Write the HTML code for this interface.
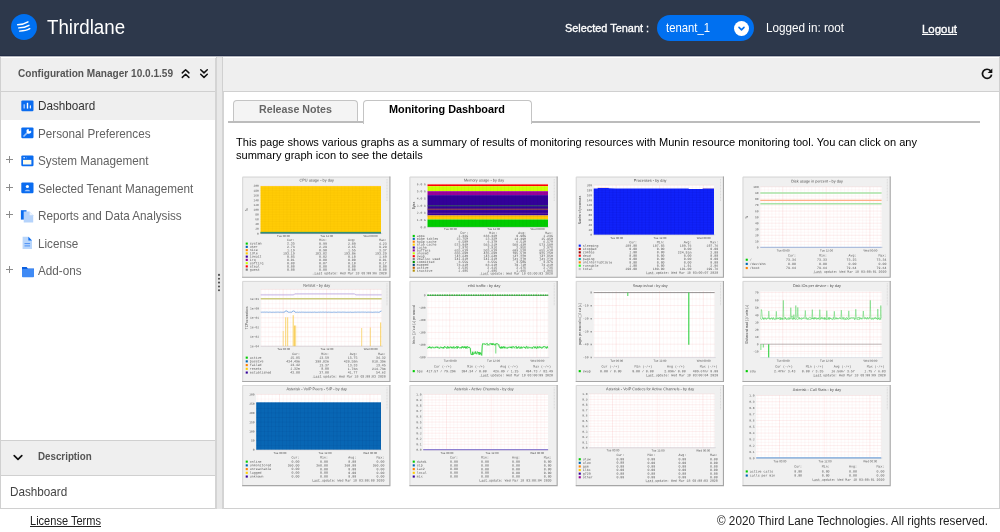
<!DOCTYPE html>
<html>
<head>
<meta charset="utf-8">
<title>Thirdlane</title>
<style>
*{box-sizing:border-box;margin:0;padding:0}
html,body{width:1000px;height:532px;overflow:hidden;background:#fff;will-change:transform;font-family:"Liberation Sans",sans-serif;color:#333}
.sx{position:absolute;white-space:nowrap;transform-origin:0 50%;display:block}
#hdr{position:absolute;left:0;top:0;width:1000px;height:56px;background:#2d384b;border-bottom:1px solid #222c45}
#logo{position:absolute;left:11px;top:14px;width:26px;height:26px;border-radius:50%;background:#0070f0}
#brand{left:47px;top:15px;font-size:19.5px;line-height:24px;color:#fff;transform:scaleX(.96)}
#selten{left:565px;top:20px;font-size:11.8px;line-height:16px;color:#fff;-webkit-text-stroke:.35px #fff;transform:scaleX(.924)}
#pill{position:absolute;left:656.5px;top:15.3px;width:97.5px;height:26px;border-radius:13px;background:#0070f0}
#pill span{left:9.5px;top:4.7px;font-size:13px;line-height:16px;color:#fff;transform:scaleX(.87)}
#pillc{position:absolute;left:77.5px;top:5.6px;width:15px;height:15px;border-radius:50%;background:#fff}
#logged{left:766px;top:20px;font-size:13px;line-height:16px;color:#fff;transform:scaleX(.9)}
#logout{left:922px;top:20.6px;font-size:11.5px;line-height:16px;color:#fff;-webkit-text-stroke:.35px #fff;text-decoration:underline;transform:scaleX(.995)}

#hline{position:absolute;left:0;top:56px;width:1000px;height:1px;background:#b4b7be}
#left{position:absolute;left:0;top:57px;width:217px;height:452px;border:1px solid #d0d0d0;border-top:none;background:#fff}
#lhead{position:absolute;left:0;top:58px;width:217px;height:34px;background:#efefef;border:1px solid #d0d0d0;border-top:none}
#lhead span{left:17px;top:7.6px;font-size:11.5px;line-height:14px;color:#555;font-weight:bold;transform:scaleX(.876)}
.row{position:absolute;left:1px;width:215px;height:27.6px;font-size:13px;line-height:27.6px;color:#626262;white-space:nowrap}
.row .t{left:37px;top:.4px;transform:scaleX(.9)}
.row .plus{position:absolute;left:5.3px;top:9px;width:7px;height:7px;opacity:.75}
.row .plus:before{content:"";position:absolute;left:0;top:3px;width:7px;height:1px;background:#666}
.row .plus:after{content:"";position:absolute;left:3px;top:0;width:1px;height:7px;background:#666}
.row svg{position:absolute;left:20px;top:7px}
#split{position:absolute;left:217px;top:57px;width:5px;height:452px;background:#e8e8e8}
.sl{position:absolute;top:58px;height:451px;background:#d4d4d4}
.dot{position:absolute;left:218.6px;width:1.9px;height:1.9px;border-radius:50%;background:#555}
#right{position:absolute;left:222px;top:57px;width:778px;height:452px;border:1px solid #d0d0d0;border-top:none;background:#fff}
#rhead{position:absolute;left:222px;top:58px;width:778px;height:34px;background:#efefef;border:1px solid #d0d0d0;border-top:none}
.tab{position:absolute;top:100px;height:23px;border:1px solid #c4c4c4;border-bottom:none;border-radius:4px 4px 0 0}
.tab span{top:1.4px;font-size:10.4px;line-height:16px;font-weight:bold}
#tabline{position:absolute;left:228px;top:120.8px;width:751.5px;height:1.8px;background:#bcbcbc}
#para{position:absolute;left:236px;top:136.2px;font-size:11.05px;line-height:12.65px;color:#000;white-space:nowrap}
.g{position:absolute;width:150px;height:103px}
.g svg{display:block;overflow:visible}
.g text.s{font-family:"Liberation Sans",sans-serif}
.g text.m{font-family:"Liberation Mono",monospace}
#dhead{position:absolute;left:0;top:440px;width:217px;height:36px;background:#efefef;border:1px solid #d0d0d0}
#dhead span{left:37px;top:8.3px;font-size:11.5px;line-height:14px;color:#555;font-weight:bold;transform:scaleX(.85)}
#dbody{left:10px;top:484.2px;font-size:13px;line-height:16px;color:#444;transform:scaleX(.9)}
#lic{left:30px;top:513.8px;font-size:12px;line-height:14px;color:#222;text-decoration:underline;transform:scaleX(.92)}
#copy{left:717px;top:513.5px;font-size:12.5px;line-height:14px;color:#222;transform:scaleX(.936)}
</style>
</head>
<body>
<div id="hdr">
  <div id="logo"><svg width="26" height="26" viewBox="0 0 26 26" style="position:absolute;left:0;top:0"><g fill="none" stroke="#fff" stroke-width="1.4" stroke-linecap="round"><path d="M6.6 10.7C10 10.6 14 9.8 17 7.9"/><path d="M7.7 13.9C11 13.8 15 13.1 18 11.3"/><path d="M8.6 17.1C12 17 16 16.4 18.8 14.7"/></g></svg></div>
  <span class="sx" id="brand">Thirdlane</span>
  <span class="sx" id="selten">Selected Tenant :</span>
  <div id="pill"><span class="sx">tenant_1</span><div id="pillc"><svg width="15" height="15" viewBox="0 0 15 15" style="position:absolute;left:0;top:0"><path d="M5 6.4L7.5 8.8L10 6.4" fill="none" stroke="#0070f0" stroke-width="1.6" stroke-linecap="round" stroke-linejoin="round"/></svg></div></div>
  <span class="sx" id="logged">Logged in: root</span>
  <span class="sx" id="logout">Logout</span>
</div>

<div id="hline"></div>
<div id="left"></div>
<div id="lhead"><span class="sx">Configuration Manager 10.0.1.59</span>
<svg width="30" height="12" viewBox="0 0 30 12" style="position:absolute;left:179.4px;top:9.6px"><g fill="none" stroke="#111" stroke-width="1.5" stroke-linecap="round" stroke-linejoin="round"><path d="M2.3 4.9L5.6 1.8L8.9 4.9M2.3 9.4L5.6 6.3L8.9 9.4"/><path d="M20.7 1.8L24 4.9L27.3 1.8M20.7 6.3L24 9.4L27.3 6.3"/></g></svg></div>
<div class="row" style="top:92px;background:#efefef"><svg style="left:20.4px;top:7.8px" width="13" height="12" viewBox="0 0 13 12"><rect x=".3" y=".4" width="12.2" height="10.8" rx="1.2" fill="#0a6cf0"/><rect x="2.6" y="4.3" width="1.1" height="4.2" fill="#cfe0fc"/><rect x="5.8" y="2.8" width="1.4" height="5.8" fill="#fff"/><rect x="8.8" y="5.2" width="1.1" height="3.4" rx=".5" fill="#fff"/></svg><span class="sx t" style="color:#333">Dashboard</span></div>
<div class="row" style="top:119.5px"><svg style="left:20.4px;top:7.8px" width="13" height="12" viewBox="0 0 13 12"><rect x=".3" y=".4" width="12.2" height="10.8" rx="1.2" fill="#0a6cf0"/><path d="M3 9L7 5" stroke="#9cc3fa" stroke-width="1.7" stroke-linecap="round"/><path d="M9.8 3.2A2.3 2.3 0 1 1 7.6 2.1L7.9 3.9L9.3 4.2Z" fill="#fff"/></svg><span class="sx t">Personal Preferences</span></div>
<div class="row" style="top:147.0px"><i class="plus"></i><svg style="left:20.4px;top:7.8px" width="13" height="12" viewBox="0 0 13 12"><rect x=".3" y=".4" width="12.2" height="10.8" rx="1.2" fill="#0a6cf0"/><rect x="2" y="4.9" width="8.4" height="4.6" fill="#fffbe8"/><circle cx="3.1" cy="2.8" r=".75" fill="#fff"/><circle cx="5.6" cy="2.8" r=".5" fill="#6fa8f8"/></svg><span class="sx t">System Management</span></div>
<div class="row" style="top:174.5px"><i class="plus"></i><svg style="left:20.4px;top:7.8px" width="13" height="12" viewBox="0 0 13 12"><rect x=".3" y=".4" width="12.2" height="10.8" rx="1.2" fill="#0a6cf0"/><circle cx="6.4" cy="4.5" r="1.6" fill="#fff"/><path d="M3.6 9.3C3.9 7.3 8.9 7.3 9.2 9.3Z" fill="#9cc3fa"/></svg><span class="sx t">Selected Tenant Management</span></div>
<div class="row" style="top:202.0px"><i class="plus"></i><svg style="left:19.4px;top:6.6px" width="14" height="14" viewBox="0 0 14 14"><path d="M.9 1.2h5.6v9.4H.9z" fill="#0a6cf0"/><path d="M3.7 2.6h5.9l3.6 3.6v7.2H3.7z" fill="#b5d3fb"/><path d="M9.6 2.6l3.6 3.6H9.6z" fill="#fff" opacity=".75"/></svg><span class="sx t">Reports and Data Analysiss</span></div>
<div class="row" style="top:229.5px"><svg style="left:20.4px;top:6.8px" width="12" height="14" viewBox="0 0 12 14"><path d="M1.6.8h5.8l3.6 3.6v8.6H1.6z" fill="#b9d6fb"/><path d="M7.4.8l3.6 3.6H7.4z" fill="#0a6cf0"/><path d="M3.5 7.6h5.6M3.5 9.9h5.6" stroke="#4c90f4" stroke-width="1"/></svg><span class="sx t">License</span></div>
<div class="row" style="top:257.0px"><i class="plus"></i><svg style="left:19.6px;top:8.6px" width="14" height="12" viewBox="0 0 14 12"><path d="M1 .9h4.6l1.2 1.6h6.2v2H1z" fill="#0a5fe0"/><rect x="1" y="2.9" width="12" height="8.3" rx=".8" fill="#3f8af5"/></svg><span class="sx t">Add-ons</span></div>
<div id="dhead"><svg width="12" height="8" viewBox="0 0 12 8" style="position:absolute;left:10.6px;top:12.7px"><path d="M2.2 1.6L6 5.3L9.8 1.6" fill="none" stroke="#111" stroke-width="1.7" stroke-linecap="round" stroke-linejoin="round"/></svg><span class="sx">Description</span></div>
<span class="sx" id="dbody">Dashboard</span>

<div id="split"></div>
<div id="right"></div>
<div class="sl" style="left:215.3px;width:1.7px"></div><div class="sl" style="left:222px;width:1.8px"></div><svg width="6" height="24" viewBox="0 0 6 24" style="position:absolute;left:216.1px;top:271px"><circle cx="3" cy="3.90" r="1.05" fill="#505050"/><circle cx="3" cy="7.75" r="1.05" fill="#505050"/><circle cx="3" cy="11.60" r="1.05" fill="#505050"/><circle cx="3" cy="15.45" r="1.05" fill="#505050"/><circle cx="3" cy="19.30" r="1.05" fill="#505050"/></svg>
<div id="rhead"><svg width="14" height="14" viewBox="0 0 14 14" style="position:absolute;left:757px;top:9px"><path d="M10.6 3.9A4.6 4.6 0 1 0 11.6 7.6" fill="none" stroke="#111" stroke-width="1.7"/><path d="M12.3 1.4V6H7.7Z" fill="#111"/></svg></div>
<div class="tab" style="left:233px;width:125px;background:#f4f4f4;color:#666"><span class="sx" style="left:25px;transform:scaleX(1.027)">Release Notes</span></div>
<div id="tabline"></div>
<div class="tab" style="left:363px;width:169px;background:#fff;color:#000;height:24px"><span class="sx" style="left:25px;transform:scaleX(1.046)">Monitoring Dashboard</span></div>
<div id="para">This page shows various graphs as a summary of results of monitoring resources with Munin resource monitoring tool. You can click on any<br>summary graph icon to see the details</div>

<div class="g" style="left:242px;top:176.2px"><svg width="150" height="103" viewBox="0 0 150 103"><rect x="0.2" y="0.6" width="148.2" height="101.1" fill="#f0f0f0"/><path d="M0.7 101.69999999999999V1.1H148.39999999999998" stroke="#d6d6d6" stroke-width="1" fill="none"/><path d="M147.89999999999998 0.6V101.19999999999999H0.2" stroke="#a6a6a6" stroke-width="1.1" fill="none"/><text x="74.7" y="5.40" font-size="3.85" text-anchor="middle" fill="#333" fill-opacity="0.85" class="s" transform="rotate(0.03)">CPU usage - by day</text><rect x="18.5" y="9.8" width="120.5" height="47.8" fill="#fff"/><path d="M19.22 9.8V57.6M22.85 9.8V57.6M26.48 9.8V57.6M30.11 9.8V57.6M33.74 9.8V57.6M37.37 9.8V57.6M41.00 9.8V57.6M44.63 9.8V57.6M48.26 9.8V57.6M51.89 9.8V57.6M55.52 9.8V57.6M59.15 9.8V57.6M62.78 9.8V57.6M66.41 9.8V57.6M70.04 9.8V57.6M73.67 9.8V57.6M77.30 9.8V57.6M80.93 9.8V57.6M84.56 9.8V57.6M88.19 9.8V57.6M91.82 9.8V57.6M95.45 9.8V57.6M99.08 9.8V57.6M102.71 9.8V57.6M106.34 9.8V57.6M109.97 9.8V57.6M113.60 9.8V57.6M117.23 9.8V57.6M120.86 9.8V57.6M124.49 9.8V57.6M128.12 9.8V57.6M131.75 9.8V57.6M135.38 9.8V57.6" stroke="#f9caca" stroke-width="0.4" fill="none" opacity="0.32"/><path d="M18.5 55.21H139M18.5 50.43H139M18.5 45.65H139M18.5 40.87H139M18.5 36.09H139M18.5 31.31H139M18.5 26.53H139M18.5 21.75H139M18.5 16.97H139M18.5 12.19H139" stroke="#f9caca" stroke-width="0.4" fill="none" opacity="0.32"/><path d="M18.5 57.60H139M18.5 52.82H139M18.5 48.04H139M18.5 43.26H139M18.5 38.48H139M18.5 33.70H139M18.5 28.92H139M18.5 24.14H139M18.5 19.36H139M18.5 14.58H139M18.5 9.80H139" stroke="#f4a4a4" stroke-width="0.4" fill="none" opacity="0.45"/><path d="M41.00 9.8V57.6M84.30 9.8V57.6M128.10 9.8V57.6" stroke="#f4a4a4" stroke-width="0.4" fill="none" opacity="0.33"/><rect x="18.5" y="10.100000000000001" width="120.5" height="47.5" fill="#ffcb05"/><path d="M19.50 10.4V55.6" stroke="#e0a800" stroke-width="0.35" opacity="0.3"/><path d="M23.13 10.4V55.6" stroke="#e0a800" stroke-width="0.35" opacity="0.3"/><path d="M26.76 10.4V55.6" stroke="#e0a800" stroke-width="0.35" opacity="0.3"/><path d="M30.39 10.4V55.6" stroke="#e0a800" stroke-width="0.35" opacity="0.3"/><path d="M34.02 10.4V55.6" stroke="#e0a800" stroke-width="0.35" opacity="0.3"/><path d="M37.65 10.4V55.6" stroke="#e0a800" stroke-width="0.35" opacity="0.3"/><path d="M41.28 10.4V55.6" stroke="#e0a800" stroke-width="0.35" opacity="0.3"/><path d="M44.91 10.4V55.6" stroke="#e0a800" stroke-width="0.35" opacity="0.3"/><path d="M48.54 10.4V55.6" stroke="#e0a800" stroke-width="0.35" opacity="0.3"/><path d="M52.17 10.4V55.6" stroke="#e0a800" stroke-width="0.35" opacity="0.3"/><path d="M55.80 10.4V55.6" stroke="#e0a800" stroke-width="0.35" opacity="0.3"/><path d="M59.43 10.4V55.6" stroke="#e0a800" stroke-width="0.35" opacity="0.3"/><path d="M63.06 10.4V55.6" stroke="#e0a800" stroke-width="0.35" opacity="0.3"/><path d="M66.69 10.4V55.6" stroke="#e0a800" stroke-width="0.35" opacity="0.3"/><path d="M70.32 10.4V55.6" stroke="#e0a800" stroke-width="0.35" opacity="0.3"/><path d="M73.95 10.4V55.6" stroke="#e0a800" stroke-width="0.35" opacity="0.3"/><path d="M77.58 10.4V55.6" stroke="#e0a800" stroke-width="0.35" opacity="0.3"/><path d="M81.21 10.4V55.6" stroke="#e0a800" stroke-width="0.35" opacity="0.3"/><path d="M84.84 10.4V55.6" stroke="#e0a800" stroke-width="0.35" opacity="0.3"/><path d="M88.47 10.4V55.6" stroke="#e0a800" stroke-width="0.35" opacity="0.3"/><path d="M92.10 10.4V55.6" stroke="#e0a800" stroke-width="0.35" opacity="0.3"/><path d="M95.73 10.4V55.6" stroke="#e0a800" stroke-width="0.35" opacity="0.3"/><path d="M99.36 10.4V55.6" stroke="#e0a800" stroke-width="0.35" opacity="0.3"/><path d="M102.99 10.4V55.6" stroke="#e0a800" stroke-width="0.35" opacity="0.3"/><path d="M106.62 10.4V55.6" stroke="#e0a800" stroke-width="0.35" opacity="0.3"/><path d="M110.25 10.4V55.6" stroke="#e0a800" stroke-width="0.35" opacity="0.3"/><path d="M113.88 10.4V55.6" stroke="#e0a800" stroke-width="0.35" opacity="0.3"/><path d="M117.51 10.4V55.6" stroke="#e0a800" stroke-width="0.35" opacity="0.3"/><path d="M121.14 10.4V55.6" stroke="#e0a800" stroke-width="0.35" opacity="0.3"/><path d="M124.77 10.4V55.6" stroke="#e0a800" stroke-width="0.35" opacity="0.3"/><path d="M128.40 10.4V55.6" stroke="#e0a800" stroke-width="0.35" opacity="0.3"/><path d="M132.03 10.4V55.6" stroke="#e0a800" stroke-width="0.35" opacity="0.3"/><path d="M135.66 10.4V55.6" stroke="#e0a800" stroke-width="0.35" opacity="0.3"/><path d="M18.5 12.19H139" stroke="#e0a800" stroke-width="0.35" opacity="0.25"/><path d="M18.5 14.58H139" stroke="#e0a800" stroke-width="0.35" opacity="0.25"/><path d="M18.5 16.97H139" stroke="#e0a800" stroke-width="0.35" opacity="0.25"/><path d="M18.5 19.36H139" stroke="#e0a800" stroke-width="0.35" opacity="0.25"/><path d="M18.5 21.75H139" stroke="#e0a800" stroke-width="0.35" opacity="0.25"/><path d="M18.5 24.14H139" stroke="#e0a800" stroke-width="0.35" opacity="0.25"/><path d="M18.5 26.53H139" stroke="#e0a800" stroke-width="0.35" opacity="0.25"/><path d="M18.5 28.92H139" stroke="#e0a800" stroke-width="0.35" opacity="0.25"/><path d="M18.5 31.31H139" stroke="#e0a800" stroke-width="0.35" opacity="0.25"/><path d="M18.5 33.70H139" stroke="#e0a800" stroke-width="0.35" opacity="0.25"/><path d="M18.5 36.09H139" stroke="#e0a800" stroke-width="0.35" opacity="0.25"/><path d="M18.5 38.48H139" stroke="#e0a800" stroke-width="0.35" opacity="0.25"/><path d="M18.5 40.87H139" stroke="#e0a800" stroke-width="0.35" opacity="0.25"/><path d="M18.5 43.26H139" stroke="#e0a800" stroke-width="0.35" opacity="0.25"/><path d="M18.5 45.65H139" stroke="#e0a800" stroke-width="0.35" opacity="0.25"/><path d="M18.5 48.04H139" stroke="#e0a800" stroke-width="0.35" opacity="0.25"/><path d="M18.5 50.43H139" stroke="#e0a800" stroke-width="0.35" opacity="0.25"/><path d="M18.5 52.82H139" stroke="#e0a800" stroke-width="0.35" opacity="0.25"/><path d="M18.5 55.21H139" stroke="#e0a800" stroke-width="0.35" opacity="0.25"/><rect x="18.5" y="55.9" width="120.5" height="0.7" fill="#00b050"/><rect x="18.5" y="56.5" width="120.5" height="1.1" fill="#0066b3"/><path d="M18.5 57.6H140.2" stroke="#9ab" stroke-width="0.4" fill="none" opacity="0.7"/><text x="16.9" y="58.65" font-size="3.0" text-anchor="end" fill="#404040" fill-opacity="0.85" class="m" transform="rotate(0.03)">0</text><text x="16.9" y="53.87" font-size="3.0" text-anchor="end" fill="#404040" fill-opacity="0.85" class="m" transform="rotate(0.03)">20</text><text x="16.9" y="49.09" font-size="3.0" text-anchor="end" fill="#404040" fill-opacity="0.85" class="m" transform="rotate(0.03)">40</text><text x="16.9" y="44.31" font-size="3.0" text-anchor="end" fill="#404040" fill-opacity="0.85" class="m" transform="rotate(0.03)">60</text><text x="16.9" y="39.53" font-size="3.0" text-anchor="end" fill="#404040" fill-opacity="0.85" class="m" transform="rotate(0.03)">80</text><text x="16.9" y="34.75" font-size="3.0" text-anchor="end" fill="#404040" fill-opacity="0.85" class="m" transform="rotate(0.03)">100</text><text x="16.9" y="29.97" font-size="3.0" text-anchor="end" fill="#404040" fill-opacity="0.85" class="m" transform="rotate(0.03)">120</text><text x="16.9" y="25.19" font-size="3.0" text-anchor="end" fill="#404040" fill-opacity="0.85" class="m" transform="rotate(0.03)">140</text><text x="16.9" y="20.41" font-size="3.0" text-anchor="end" fill="#404040" fill-opacity="0.85" class="m" transform="rotate(0.03)">160</text><text x="16.9" y="15.63" font-size="3.0" text-anchor="end" fill="#404040" fill-opacity="0.85" class="m" transform="rotate(0.03)">180</text><text x="16.9" y="10.85" font-size="3.0" text-anchor="end" fill="#404040" fill-opacity="0.85" class="m" transform="rotate(0.03)">200</text><text x="4.9" y="34.70" font-size="3.0" text-anchor="middle" fill="#404040" fill-opacity="0.95" class="s" transform="rotate(-90 4.9 33.7)">%</text><text x="41.5" y="60.95" font-size="2.9" text-anchor="middle" fill="#404040" fill-opacity="0.9" class="s" transform="rotate(0.03)">Tue 00:00</text><text x="84.8" y="60.95" font-size="2.9" text-anchor="middle" fill="#404040" fill-opacity="0.9" class="s" transform="rotate(0.03)">Tue 12:00</text><text x="128.6" y="60.95" font-size="2.9" text-anchor="middle" fill="#404040" fill-opacity="0.9" class="s" transform="rotate(0.03)">Wed 00:00</text><path d="M144.99999999999997 3.1v22" stroke="#c4c4c4" stroke-width="0.6" stroke-dasharray="0.8 0.7" fill="none"/><text x="52.8" y="65.05" font-size="3.25" text-anchor="end" fill="#404040" fill-opacity="0.85" class="m" transform="rotate(0.03)">Cur:</text><text x="84.9" y="65.05" font-size="3.25" text-anchor="end" fill="#404040" fill-opacity="0.85" class="m" transform="rotate(0.03)">Min:</text><text x="113.8" y="65.05" font-size="3.25" text-anchor="end" fill="#404040" fill-opacity="0.85" class="m" transform="rotate(0.03)">Avg:</text><text x="144.8" y="65.05" font-size="3.25" text-anchor="end" fill="#404040" fill-opacity="0.85" class="m" transform="rotate(0.03)">Max:</text><rect x="3.7" y="66.55" width="2.1" height="2.1" fill="#00cc00"/><text x="7.9" y="68.60" font-size="3.25" text-anchor="start" fill="#404040" fill-opacity="0.85" class="m" transform="rotate(0.03)">system</text><text x="52.8" y="68.60" font-size="3.25" text-anchor="end" fill="#404040" fill-opacity="0.85" class="m" transform="rotate(0.03)">2.35</text><text x="84.9" y="68.60" font-size="3.25" text-anchor="end" fill="#404040" fill-opacity="0.85" class="m" transform="rotate(0.03)">0.99</text><text x="113.8" y="68.60" font-size="3.25" text-anchor="end" fill="#404040" fill-opacity="0.85" class="m" transform="rotate(0.03)">2.09</text><text x="144.8" y="68.60" font-size="3.25" text-anchor="end" fill="#404040" fill-opacity="0.85" class="m" transform="rotate(0.03)">4.23</text><rect x="3.7" y="69.81" width="2.1" height="2.1" fill="#0066b3"/><text x="7.9" y="71.86" font-size="3.25" text-anchor="start" fill="#404040" fill-opacity="0.85" class="m" transform="rotate(0.03)">user</text><text x="52.8" y="71.86" font-size="3.25" text-anchor="end" fill="#404040" fill-opacity="0.85" class="m" transform="rotate(0.03)">2.73</text><text x="84.9" y="71.86" font-size="3.25" text-anchor="end" fill="#404040" fill-opacity="0.85" class="m" transform="rotate(0.03)">2.29</text><text x="113.8" y="71.86" font-size="3.25" text-anchor="end" fill="#404040" fill-opacity="0.85" class="m" transform="rotate(0.03)">2.65</text><text x="144.8" y="71.86" font-size="3.25" text-anchor="end" fill="#404040" fill-opacity="0.85" class="m" transform="rotate(0.03)">9.29</text><rect x="3.7" y="73.06" width="2.1" height="2.1" fill="#ff8000"/><text x="7.9" y="75.11" font-size="3.25" text-anchor="start" fill="#404040" fill-opacity="0.85" class="m" transform="rotate(0.03)">nice</text><text x="52.8" y="75.11" font-size="3.25" text-anchor="end" fill="#404040" fill-opacity="0.85" class="m" transform="rotate(0.03)">1.19</text><text x="84.9" y="75.11" font-size="3.25" text-anchor="end" fill="#404040" fill-opacity="0.85" class="m" transform="rotate(0.03)">0.90</text><text x="113.8" y="75.11" font-size="3.25" text-anchor="end" fill="#404040" fill-opacity="0.85" class="m" transform="rotate(0.03)">1.55</text><text x="144.8" y="75.11" font-size="3.25" text-anchor="end" fill="#404040" fill-opacity="0.85" class="m" transform="rotate(0.03)">3.37</text><rect x="3.7" y="76.32" width="2.1" height="2.1" fill="#ffcc00"/><text x="7.9" y="78.37" font-size="3.25" text-anchor="start" fill="#404040" fill-opacity="0.85" class="m" transform="rotate(0.03)">idle</text><text x="52.8" y="78.37" font-size="3.25" text-anchor="end" fill="#404040" fill-opacity="0.85" class="m" transform="rotate(0.03)">193.19</text><text x="84.9" y="78.37" font-size="3.25" text-anchor="end" fill="#404040" fill-opacity="0.85" class="m" transform="rotate(0.03)">183.02</text><text x="113.8" y="78.37" font-size="3.25" text-anchor="end" fill="#404040" fill-opacity="0.85" class="m" transform="rotate(0.03)">193.0m</text><text x="144.8" y="78.37" font-size="3.25" text-anchor="end" fill="#404040" fill-opacity="0.85" class="m" transform="rotate(0.03)">193.29</text><rect x="3.7" y="79.57" width="2.1" height="2.1" fill="#330099"/><text x="7.9" y="81.62" font-size="3.25" text-anchor="start" fill="#404040" fill-opacity="0.85" class="m" transform="rotate(0.03)">iowait</text><text x="52.8" y="81.62" font-size="3.25" text-anchor="end" fill="#404040" fill-opacity="0.85" class="m" transform="rotate(0.03)">0.05</text><text x="84.9" y="81.62" font-size="3.25" text-anchor="end" fill="#404040" fill-opacity="0.85" class="m" transform="rotate(0.03)">0.02</text><text x="113.8" y="81.62" font-size="3.25" text-anchor="end" fill="#404040" fill-opacity="0.85" class="m" transform="rotate(0.03)">0.10</text><text x="144.8" y="81.62" font-size="3.25" text-anchor="end" fill="#404040" fill-opacity="0.85" class="m" transform="rotate(0.03)">1.69</text><rect x="3.7" y="82.83" width="2.1" height="2.1" fill="#990099"/><text x="7.9" y="84.88" font-size="3.25" text-anchor="start" fill="#404040" fill-opacity="0.85" class="m" transform="rotate(0.03)">irq</text><text x="52.8" y="84.88" font-size="3.25" text-anchor="end" fill="#404040" fill-opacity="0.85" class="m" transform="rotate(0.03)">0.01</text><text x="84.9" y="84.88" font-size="3.25" text-anchor="end" fill="#404040" fill-opacity="0.85" class="m" transform="rotate(0.03)">0.00</text><text x="113.8" y="84.88" font-size="3.25" text-anchor="end" fill="#404040" fill-opacity="0.85" class="m" transform="rotate(0.03)">0.00</text><text x="144.8" y="84.88" font-size="3.25" text-anchor="end" fill="#404040" fill-opacity="0.85" class="m" transform="rotate(0.03)">0.01</text><rect x="3.7" y="86.09" width="2.1" height="2.1" fill="#ccff00"/><text x="7.9" y="88.14" font-size="3.25" text-anchor="start" fill="#404040" fill-opacity="0.85" class="m" transform="rotate(0.03)">softirq</text><text x="52.8" y="88.14" font-size="3.25" text-anchor="end" fill="#404040" fill-opacity="0.85" class="m" transform="rotate(0.03)">0.08</text><text x="84.9" y="88.14" font-size="3.25" text-anchor="end" fill="#404040" fill-opacity="0.85" class="m" transform="rotate(0.03)">0.07</text><text x="113.8" y="88.14" font-size="3.25" text-anchor="end" fill="#404040" fill-opacity="0.85" class="m" transform="rotate(0.03)">0.10</text><text x="144.8" y="88.14" font-size="3.25" text-anchor="end" fill="#404040" fill-opacity="0.85" class="m" transform="rotate(0.03)">0.17</text><rect x="3.7" y="89.34" width="2.1" height="2.1" fill="#ff0000"/><text x="7.9" y="91.39" font-size="3.25" text-anchor="start" fill="#404040" fill-opacity="0.85" class="m" transform="rotate(0.03)">steal</text><text x="52.8" y="91.39" font-size="3.25" text-anchor="end" fill="#404040" fill-opacity="0.85" class="m" transform="rotate(0.03)">0.00</text><text x="84.9" y="91.39" font-size="3.25" text-anchor="end" fill="#404040" fill-opacity="0.85" class="m" transform="rotate(0.03)">0.00</text><text x="113.8" y="91.39" font-size="3.25" text-anchor="end" fill="#404040" fill-opacity="0.85" class="m" transform="rotate(0.03)">0.00</text><text x="144.8" y="91.39" font-size="3.25" text-anchor="end" fill="#404040" fill-opacity="0.85" class="m" transform="rotate(0.03)">0.00</text><rect x="3.7" y="92.60" width="2.1" height="2.1" fill="#808080"/><text x="7.9" y="94.65" font-size="3.25" text-anchor="start" fill="#404040" fill-opacity="0.85" class="m" transform="rotate(0.03)">guest</text><text x="52.8" y="94.65" font-size="3.25" text-anchor="end" fill="#404040" fill-opacity="0.85" class="m" transform="rotate(0.03)">0.00</text><text x="84.9" y="94.65" font-size="3.25" text-anchor="end" fill="#404040" fill-opacity="0.85" class="m" transform="rotate(0.03)">0.00</text><text x="113.8" y="94.65" font-size="3.25" text-anchor="end" fill="#404040" fill-opacity="0.85" class="m" transform="rotate(0.03)">0.00</text><text x="144.8" y="94.65" font-size="3.25" text-anchor="end" fill="#404040" fill-opacity="0.85" class="m" transform="rotate(0.03)">0.00</text><text x="144.8" y="98.15" font-size="3.25" text-anchor="end" fill="#404040" fill-opacity="0.85" class="m" transform="rotate(0.03)">Last update: Wed Mar 18 03:00:06 2020</text><text x="75.3" y="98.75" font-size="1.6" text-anchor="middle" fill="#999" fill-opacity="0.8" class="s" transform="rotate(0.03)">Munin 2.0.25</text></svg></div>
<div class="g" style="left:408.8px;top:176.2px"><svg width="150" height="103" viewBox="0 0 150 103"><rect x="0.45" y="0.6" width="148.2" height="101.1" fill="#f0f0f0"/><path d="M0.95 101.69999999999999V1.1H148.64999999999998" stroke="#d6d6d6" stroke-width="1" fill="none"/><path d="M148.14999999999998 0.6V101.19999999999999H0.45" stroke="#a6a6a6" stroke-width="1.1" fill="none"/><text x="75.0" y="5.40" font-size="3.85" text-anchor="middle" fill="#333" fill-opacity="0.85" class="s" transform="rotate(0.03)">Memory usage - by day</text><rect x="18.5" y="8.1" width="120.5" height="43.0" fill="#fff"/><path d="M19.22 8.1V51.1M22.85 8.1V51.1M26.48 8.1V51.1M30.11 8.1V51.1M33.74 8.1V51.1M37.37 8.1V51.1M41.00 8.1V51.1M44.63 8.1V51.1M48.26 8.1V51.1M51.89 8.1V51.1M55.52 8.1V51.1M59.15 8.1V51.1M62.78 8.1V51.1M66.41 8.1V51.1M70.04 8.1V51.1M73.67 8.1V51.1M77.30 8.1V51.1M80.93 8.1V51.1M84.56 8.1V51.1M88.19 8.1V51.1M91.82 8.1V51.1M95.45 8.1V51.1M99.08 8.1V51.1M102.71 8.1V51.1M106.34 8.1V51.1M109.97 8.1V51.1M113.60 8.1V51.1M117.23 8.1V51.1M120.86 8.1V51.1M124.49 8.1V51.1M128.12 8.1V51.1M131.75 8.1V51.1M135.38 8.1V51.1" stroke="#f9caca" stroke-width="0.4" fill="none" opacity="0.32"/><path d="M18.5 51.10H139M18.5 43.93H139M18.5 36.77H139M18.5 29.60H139M18.5 22.43H139M18.5 15.27H139M18.5 8.10H139" stroke="#f4a4a4" stroke-width="0.4" fill="none" opacity="0.45"/><path d="M41.00 8.1V51.1M84.30 8.1V51.1M128.10 8.1V51.1" stroke="#f4a4a4" stroke-width="0.4" fill="none" opacity="0.33"/><rect x="18.5" y="8.4" width="120.5" height="1.80" fill="#ff0000"/><rect x="18.5" y="10.2" width="120.5" height="5.00" fill="#ccff00"/><rect x="18.5" y="15.2" width="120.5" height="3.90" fill="#990099"/><rect x="18.5" y="19.1" width="120.5" height="20.40" fill="#330099"/><rect x="18.5" y="39.5" width="120.5" height="4.00" fill="#ffcc00"/><rect x="18.5" y="43.5" width="120.5" height="7.60" fill="#00cc00"/><path d="M18.5 29.8H139" stroke="#3a8a4a" stroke-width="0.7"/><path d="M18.5 33.2H139" stroke="#c06a30" stroke-width="0.8"/><path d="M18.5 37.3H139" stroke="#8a3aa0" stroke-width="0.6"/><path d="M18.5 40.1H139" stroke="#e89020" stroke-width="0.5"/><path d="M18.5 34.8H139" stroke="#5a2ab0" stroke-width="0.4" opacity=".7"/><path d="M19.50 8.5V51.1" stroke="#000" stroke-width="0.3" opacity="0.10"/><path d="M23.13 8.5V51.1" stroke="#000" stroke-width="0.3" opacity="0.10"/><path d="M26.76 8.5V51.1" stroke="#000" stroke-width="0.3" opacity="0.10"/><path d="M30.39 8.5V51.1" stroke="#000" stroke-width="0.3" opacity="0.10"/><path d="M34.02 8.5V51.1" stroke="#000" stroke-width="0.3" opacity="0.10"/><path d="M37.65 8.5V51.1" stroke="#000" stroke-width="0.3" opacity="0.10"/><path d="M41.28 8.5V51.1" stroke="#000" stroke-width="0.3" opacity="0.10"/><path d="M44.91 8.5V51.1" stroke="#000" stroke-width="0.3" opacity="0.10"/><path d="M48.54 8.5V51.1" stroke="#000" stroke-width="0.3" opacity="0.10"/><path d="M52.17 8.5V51.1" stroke="#000" stroke-width="0.3" opacity="0.10"/><path d="M55.80 8.5V51.1" stroke="#000" stroke-width="0.3" opacity="0.10"/><path d="M59.43 8.5V51.1" stroke="#000" stroke-width="0.3" opacity="0.10"/><path d="M63.06 8.5V51.1" stroke="#000" stroke-width="0.3" opacity="0.10"/><path d="M66.69 8.5V51.1" stroke="#000" stroke-width="0.3" opacity="0.10"/><path d="M70.32 8.5V51.1" stroke="#000" stroke-width="0.3" opacity="0.10"/><path d="M73.95 8.5V51.1" stroke="#000" stroke-width="0.3" opacity="0.10"/><path d="M77.58 8.5V51.1" stroke="#000" stroke-width="0.3" opacity="0.10"/><path d="M81.21 8.5V51.1" stroke="#000" stroke-width="0.3" opacity="0.10"/><path d="M84.84 8.5V51.1" stroke="#000" stroke-width="0.3" opacity="0.10"/><path d="M88.47 8.5V51.1" stroke="#000" stroke-width="0.3" opacity="0.10"/><path d="M92.10 8.5V51.1" stroke="#000" stroke-width="0.3" opacity="0.10"/><path d="M95.73 8.5V51.1" stroke="#000" stroke-width="0.3" opacity="0.10"/><path d="M99.36 8.5V51.1" stroke="#000" stroke-width="0.3" opacity="0.10"/><path d="M102.99 8.5V51.1" stroke="#000" stroke-width="0.3" opacity="0.10"/><path d="M106.62 8.5V51.1" stroke="#000" stroke-width="0.3" opacity="0.10"/><path d="M110.25 8.5V51.1" stroke="#000" stroke-width="0.3" opacity="0.10"/><path d="M113.88 8.5V51.1" stroke="#000" stroke-width="0.3" opacity="0.10"/><path d="M117.51 8.5V51.1" stroke="#000" stroke-width="0.3" opacity="0.10"/><path d="M121.14 8.5V51.1" stroke="#000" stroke-width="0.3" opacity="0.10"/><path d="M124.77 8.5V51.1" stroke="#000" stroke-width="0.3" opacity="0.10"/><path d="M128.40 8.5V51.1" stroke="#000" stroke-width="0.3" opacity="0.10"/><path d="M132.03 8.5V51.1" stroke="#000" stroke-width="0.3" opacity="0.10"/><path d="M135.66 8.5V51.1" stroke="#000" stroke-width="0.3" opacity="0.10"/><path d="M18.5 51.1H140.2" stroke="#9ab" stroke-width="0.4" fill="none" opacity="0.7"/><text x="16.9" y="52.15" font-size="3.0" text-anchor="end" fill="#404040" fill-opacity="0.85" class="m" transform="rotate(0.03)">0.0</text><text x="16.9" y="44.98" font-size="3.0" text-anchor="end" fill="#404040" fill-opacity="0.85" class="m" transform="rotate(0.03)">1.0 G</text><text x="16.9" y="37.82" font-size="3.0" text-anchor="end" fill="#404040" fill-opacity="0.85" class="m" transform="rotate(0.03)">2.0 G</text><text x="16.9" y="30.65" font-size="3.0" text-anchor="end" fill="#404040" fill-opacity="0.85" class="m" transform="rotate(0.03)">3.0 G</text><text x="16.9" y="23.48" font-size="3.0" text-anchor="end" fill="#404040" fill-opacity="0.85" class="m" transform="rotate(0.03)">4.0 G</text><text x="16.9" y="16.32" font-size="3.0" text-anchor="end" fill="#404040" fill-opacity="0.85" class="m" transform="rotate(0.03)">5.0 G</text><text x="16.9" y="9.15" font-size="3.0" text-anchor="end" fill="#404040" fill-opacity="0.85" class="m" transform="rotate(0.03)">6.0 G</text><text x="4.9" y="30.60" font-size="3.0" text-anchor="middle" fill="#404040" fill-opacity="0.95" class="s" transform="rotate(-90 4.9 29.6)">Bytes</text><text x="41.5" y="53.95" font-size="2.9" text-anchor="middle" fill="#404040" fill-opacity="0.9" class="s" transform="rotate(0.03)">Tue 00:00</text><text x="84.8" y="53.95" font-size="2.9" text-anchor="middle" fill="#404040" fill-opacity="0.9" class="s" transform="rotate(0.03)">Tue 12:00</text><text x="128.6" y="53.95" font-size="2.9" text-anchor="middle" fill="#404040" fill-opacity="0.9" class="s" transform="rotate(0.03)">Wed 00:00</text><path d="M145.24999999999997 3.1v22" stroke="#c4c4c4" stroke-width="0.6" stroke-dasharray="0.8 0.7" fill="none"/><text x="59.2" y="57.85" font-size="3.25" text-anchor="end" fill="#404040" fill-opacity="0.85" class="m" transform="rotate(0.03)">Cur:</text><text x="88.2" y="57.85" font-size="3.25" text-anchor="end" fill="#404040" fill-opacity="0.85" class="m" transform="rotate(0.03)">Min:</text><text x="117.1" y="57.85" font-size="3.25" text-anchor="end" fill="#404040" fill-opacity="0.85" class="m" transform="rotate(0.03)">Avg:</text><text x="144.0" y="57.85" font-size="3.25" text-anchor="end" fill="#404040" fill-opacity="0.85" class="m" transform="rotate(0.03)">Max:</text><rect x="3.7" y="58.90" width="2.1" height="2.1" fill="#00cc00"/><text x="7.9" y="60.95" font-size="3.25" text-anchor="start" fill="#404040" fill-opacity="0.85" class="m" transform="rotate(0.03)">apps</text><text x="59.2" y="60.95" font-size="3.25" text-anchor="end" fill="#404040" fill-opacity="0.85" class="m" transform="rotate(0.03)">1.32G</text><text x="88.2" y="60.95" font-size="3.25" text-anchor="end" fill="#404040" fill-opacity="0.85" class="m" transform="rotate(0.03)">633.32M</text><text x="117.1" y="60.95" font-size="3.25" text-anchor="end" fill="#404040" fill-opacity="0.85" class="m" transform="rotate(0.03)">0.98G</text><text x="144.0" y="60.95" font-size="3.25" text-anchor="end" fill="#404040" fill-opacity="0.85" class="m" transform="rotate(0.03)">1.23G</text><rect x="3.7" y="61.79" width="2.1" height="2.1" fill="#0066b3"/><text x="7.9" y="63.84" font-size="3.25" text-anchor="start" fill="#404040" fill-opacity="0.85" class="m" transform="rotate(0.03)">page_tables</text><text x="59.2" y="63.84" font-size="3.25" text-anchor="end" fill="#404040" fill-opacity="0.85" class="m" transform="rotate(0.03)">15.75M</text><text x="88.2" y="63.84" font-size="3.25" text-anchor="end" fill="#404040" fill-opacity="0.85" class="m" transform="rotate(0.03)">13.32M</text><text x="117.1" y="63.84" font-size="3.25" text-anchor="end" fill="#404040" fill-opacity="0.85" class="m" transform="rotate(0.03)">14.39M</text><text x="144.0" y="63.84" font-size="3.25" text-anchor="end" fill="#404040" fill-opacity="0.85" class="m" transform="rotate(0.03)">15.95M</text><rect x="3.7" y="64.68" width="2.1" height="2.1" fill="#ff8000"/><text x="7.9" y="66.73" font-size="3.25" text-anchor="start" fill="#404040" fill-opacity="0.85" class="m" transform="rotate(0.03)">swap_cache</text><text x="59.2" y="66.73" font-size="3.25" text-anchor="end" fill="#404040" fill-opacity="0.85" class="m" transform="rotate(0.03)">6.50M</text><text x="88.2" y="66.73" font-size="3.25" text-anchor="end" fill="#404040" fill-opacity="0.85" class="m" transform="rotate(0.03)">6.37M</text><text x="117.1" y="66.73" font-size="3.25" text-anchor="end" fill="#404040" fill-opacity="0.85" class="m" transform="rotate(0.03)">6.51M</text><text x="144.0" y="66.73" font-size="3.25" text-anchor="end" fill="#404040" fill-opacity="0.85" class="m" transform="rotate(0.03)">6.57M</text><rect x="3.7" y="67.58" width="2.1" height="2.1" fill="#ffcc00"/><text x="7.9" y="69.62" font-size="3.25" text-anchor="start" fill="#404040" fill-opacity="0.85" class="m" transform="rotate(0.03)">slab_cache</text><text x="59.2" y="69.62" font-size="3.25" text-anchor="end" fill="#404040" fill-opacity="0.85" class="m" transform="rotate(0.03)">573.94M</text><text x="88.2" y="69.62" font-size="3.25" text-anchor="end" fill="#404040" fill-opacity="0.85" class="m" transform="rotate(0.03)">563.21M</text><text x="117.1" y="69.62" font-size="3.25" text-anchor="end" fill="#404040" fill-opacity="0.85" class="m" transform="rotate(0.03)">568.43M</text><text x="144.0" y="69.62" font-size="3.25" text-anchor="end" fill="#404040" fill-opacity="0.85" class="m" transform="rotate(0.03)">573.58M</text><rect x="3.7" y="70.47" width="2.1" height="2.1" fill="#330099"/><text x="7.9" y="72.52" font-size="3.25" text-anchor="start" fill="#404040" fill-opacity="0.85" class="m" transform="rotate(0.03)">cache</text><text x="59.2" y="72.52" font-size="3.25" text-anchor="end" fill="#404040" fill-opacity="0.85" class="m" transform="rotate(0.03)">2.97G</text><text x="88.2" y="72.52" font-size="3.25" text-anchor="end" fill="#404040" fill-opacity="0.85" class="m" transform="rotate(0.03)">2.91G</text><text x="117.1" y="72.52" font-size="3.25" text-anchor="end" fill="#404040" fill-opacity="0.85" class="m" transform="rotate(0.03)">2.95G</text><text x="144.0" y="72.52" font-size="3.25" text-anchor="end" fill="#404040" fill-opacity="0.85" class="m" transform="rotate(0.03)">2.97G</text><rect x="3.7" y="73.36" width="2.1" height="2.1" fill="#990099"/><text x="7.9" y="75.41" font-size="3.25" text-anchor="start" fill="#404040" fill-opacity="0.85" class="m" transform="rotate(0.03)">buffers</text><text x="59.2" y="75.41" font-size="3.25" text-anchor="end" fill="#404040" fill-opacity="0.85" class="m" transform="rotate(0.03)">655.63M</text><text x="88.2" y="75.41" font-size="3.25" text-anchor="end" fill="#404040" fill-opacity="0.85" class="m" transform="rotate(0.03)">503.63M</text><text x="117.1" y="75.41" font-size="3.25" text-anchor="end" fill="#404040" fill-opacity="0.85" class="m" transform="rotate(0.03)">609.52M</text><text x="144.0" y="75.41" font-size="3.25" text-anchor="end" fill="#404040" fill-opacity="0.85" class="m" transform="rotate(0.03)">655.63M</text><rect x="3.7" y="76.25" width="2.1" height="2.1" fill="#ccff00"/><text x="7.9" y="78.30" font-size="3.25" text-anchor="start" fill="#404040" fill-opacity="0.85" class="m" transform="rotate(0.03)">unused</text><text x="59.2" y="78.30" font-size="3.25" text-anchor="end" fill="#404040" fill-opacity="0.85" class="m" transform="rotate(0.03)">655.69M</text><text x="88.2" y="78.30" font-size="3.25" text-anchor="end" fill="#404040" fill-opacity="0.85" class="m" transform="rotate(0.03)">435.69M</text><text x="117.1" y="78.30" font-size="3.25" text-anchor="end" fill="#404040" fill-opacity="0.85" class="m" transform="rotate(0.03)">705.51M</text><text x="144.0" y="78.30" font-size="3.25" text-anchor="end" fill="#404040" fill-opacity="0.85" class="m" transform="rotate(0.03)">925.25M</text><rect x="3.7" y="79.14" width="2.1" height="2.1" fill="#ff0000"/><text x="7.9" y="81.19" font-size="3.25" text-anchor="start" fill="#404040" fill-opacity="0.85" class="m" transform="rotate(0.03)">swap</text><text x="59.2" y="81.19" font-size="3.25" text-anchor="end" fill="#404040" fill-opacity="0.85" class="m" transform="rotate(0.03)">143.64M</text><text x="88.2" y="81.19" font-size="3.25" text-anchor="end" fill="#404040" fill-opacity="0.85" class="m" transform="rotate(0.03)">143.64M</text><text x="117.1" y="81.19" font-size="3.25" text-anchor="end" fill="#404040" fill-opacity="0.85" class="m" transform="rotate(0.03)">147.22M</text><text x="144.0" y="81.19" font-size="3.25" text-anchor="end" fill="#404040" fill-opacity="0.85" class="m" transform="rotate(0.03)">147.85M</text><rect x="3.7" y="82.03" width="2.1" height="2.1" fill="#808080"/><text x="7.9" y="84.08" font-size="3.25" text-anchor="start" fill="#404040" fill-opacity="0.85" class="m" transform="rotate(0.03)">vmalloc_used</text><text x="59.2" y="84.08" font-size="3.25" text-anchor="end" fill="#404040" fill-opacity="0.85" class="m" transform="rotate(0.03)">141.21M</text><text x="88.2" y="84.08" font-size="3.25" text-anchor="end" fill="#404040" fill-opacity="0.85" class="m" transform="rotate(0.03)">141.21M</text><text x="117.1" y="84.08" font-size="3.25" text-anchor="end" fill="#404040" fill-opacity="0.85" class="m" transform="rotate(0.03)">143.21M</text><text x="144.0" y="84.08" font-size="3.25" text-anchor="end" fill="#404040" fill-opacity="0.85" class="m" transform="rotate(0.03)">143.21M</text><rect x="3.7" y="84.92" width="2.1" height="2.1" fill="#008f00"/><text x="7.9" y="86.97" font-size="3.25" text-anchor="start" fill="#404040" fill-opacity="0.85" class="m" transform="rotate(0.03)">committed</text><text x="59.2" y="86.97" font-size="3.25" text-anchor="end" fill="#404040" fill-opacity="0.85" class="m" transform="rotate(0.03)">3.55G</text><text x="88.2" y="86.97" font-size="3.25" text-anchor="end" fill="#404040" fill-opacity="0.85" class="m" transform="rotate(0.03)">3.55G</text><text x="117.1" y="86.97" font-size="3.25" text-anchor="end" fill="#404040" fill-opacity="0.85" class="m" transform="rotate(0.03)">3.58G</text><text x="144.0" y="86.97" font-size="3.25" text-anchor="end" fill="#404040" fill-opacity="0.85" class="m" transform="rotate(0.03)">3.37G</text><rect x="3.7" y="87.82" width="2.1" height="2.1" fill="#00487d"/><text x="7.9" y="89.87" font-size="3.25" text-anchor="start" fill="#404040" fill-opacity="0.85" class="m" transform="rotate(0.03)">mapped</text><text x="59.2" y="89.87" font-size="3.25" text-anchor="end" fill="#404040" fill-opacity="0.85" class="m" transform="rotate(0.03)">73.21M</text><text x="88.2" y="89.87" font-size="3.25" text-anchor="end" fill="#404040" fill-opacity="0.85" class="m" transform="rotate(0.03)">63.21M</text><text x="117.1" y="89.87" font-size="3.25" text-anchor="end" fill="#404040" fill-opacity="0.85" class="m" transform="rotate(0.03)">70.71M</text><text x="144.0" y="89.87" font-size="3.25" text-anchor="end" fill="#404040" fill-opacity="0.85" class="m" transform="rotate(0.03)">73.21M</text><rect x="3.7" y="90.71" width="2.1" height="2.1" fill="#b35a00"/><text x="7.9" y="92.76" font-size="3.25" text-anchor="start" fill="#404040" fill-opacity="0.85" class="m" transform="rotate(0.03)">active</text><text x="59.2" y="92.76" font-size="3.25" text-anchor="end" fill="#404040" fill-opacity="0.85" class="m" transform="rotate(0.03)">2.53G</text><text x="88.2" y="92.76" font-size="3.25" text-anchor="end" fill="#404040" fill-opacity="0.85" class="m" transform="rotate(0.03)">2.41G</text><text x="117.1" y="92.76" font-size="3.25" text-anchor="end" fill="#404040" fill-opacity="0.85" class="m" transform="rotate(0.03)">2.47G</text><text x="144.0" y="92.76" font-size="3.25" text-anchor="end" fill="#404040" fill-opacity="0.85" class="m" transform="rotate(0.03)">2.73G</text><rect x="3.7" y="93.60" width="2.1" height="2.1" fill="#b38f00"/><text x="7.9" y="95.65" font-size="3.25" text-anchor="start" fill="#404040" fill-opacity="0.85" class="m" transform="rotate(0.03)">inactive</text><text x="59.2" y="95.65" font-size="3.25" text-anchor="end" fill="#404040" fill-opacity="0.85" class="m" transform="rotate(0.03)">1.40G</text><text x="88.2" y="95.65" font-size="3.25" text-anchor="end" fill="#404040" fill-opacity="0.85" class="m" transform="rotate(0.03)">1.40G</text><text x="117.1" y="95.65" font-size="3.25" text-anchor="end" fill="#404040" fill-opacity="0.85" class="m" transform="rotate(0.03)">1.46G</text><text x="144.0" y="95.65" font-size="3.25" text-anchor="end" fill="#404040" fill-opacity="0.85" class="m" transform="rotate(0.03)">1.96G</text><text x="144.0" y="98.55" font-size="3.25" text-anchor="end" fill="#404040" fill-opacity="0.85" class="m" transform="rotate(0.03)">Last update: Wed Mar 18 03:00:03 2020</text><text x="75.5" y="99.15" font-size="1.6" text-anchor="middle" fill="#999" fill-opacity="0.8" class="s" transform="rotate(0.03)">Munin 2.0.25</text></svg></div>
<div class="g" style="left:575px;top:176.2px"><svg width="150" height="103" viewBox="0 0 150 103"><rect x="0.75" y="0.6" width="148.2" height="101.1" fill="#f0f0f0"/><path d="M1.25 101.69999999999999V1.1H148.95" stroke="#d6d6d6" stroke-width="1" fill="none"/><path d="M148.45 0.6V101.19999999999999H0.75" stroke="#a6a6a6" stroke-width="1.1" fill="none"/><text x="75.2" y="5.80" font-size="3.85" text-anchor="middle" fill="#333" fill-opacity="0.85" class="s" transform="rotate(0.03)">Processes - by day</text><rect x="18.7" y="9.2" width="120.3" height="49.6" fill="#fff"/><path d="M19.42 9.2V58.8M23.05 9.2V58.8M26.68 9.2V58.8M30.31 9.2V58.8M33.94 9.2V58.8M37.57 9.2V58.8M41.20 9.2V58.8M44.83 9.2V58.8M48.46 9.2V58.8M52.09 9.2V58.8M55.72 9.2V58.8M59.35 9.2V58.8M62.98 9.2V58.8M66.61 9.2V58.8M70.24 9.2V58.8M73.87 9.2V58.8M77.50 9.2V58.8M81.13 9.2V58.8M84.76 9.2V58.8M88.39 9.2V58.8M92.02 9.2V58.8M95.65 9.2V58.8M99.28 9.2V58.8M102.91 9.2V58.8M106.54 9.2V58.8M110.17 9.2V58.8M113.80 9.2V58.8M117.43 9.2V58.8M121.06 9.2V58.8M124.69 9.2V58.8M128.32 9.2V58.8M131.95 9.2V58.8M135.58 9.2V58.8" stroke="#f9caca" stroke-width="0.4" fill="none" opacity="0.32"/><path d="M18.7 56.32H139M18.7 51.36H139M18.7 46.40H139M18.7 41.44H139M18.7 36.48H139M18.7 31.52H139M18.7 26.56H139M18.7 21.60H139M18.7 16.64H139M18.7 11.68H139" stroke="#f9caca" stroke-width="0.4" fill="none" opacity="0.32"/><path d="M18.7 58.80H139M18.7 53.84H139M18.7 48.88H139M18.7 43.92H139M18.7 38.96H139M18.7 34.00H139M18.7 29.04H139M18.7 24.08H139M18.7 19.12H139M18.7 14.16H139M18.7 9.20H139" stroke="#f4a4a4" stroke-width="0.4" fill="none" opacity="0.45"/><path d="M41.20 9.2V58.8M84.50 9.2V58.8M128.30 9.2V58.8" stroke="#f4a4a4" stroke-width="0.4" fill="none" opacity="0.33"/><path d="M18.7 12.6L22.7 12.4L22.7 11.9L33.7 11.9L33.7 12.3L40.7 12.4L113.7 12.5L113.7 13.0L127.7 13.0L127.7 12.4L139.0 12.6L139 58.8L18.7 58.8Z" fill="#1022fa"/><path d="M19.70 13V58.8" stroke="#0000a0" stroke-width="0.35" opacity="0.3"/><path d="M23.33 13V58.8" stroke="#0000a0" stroke-width="0.35" opacity="0.3"/><path d="M26.96 13V58.8" stroke="#0000a0" stroke-width="0.35" opacity="0.3"/><path d="M30.59 13V58.8" stroke="#0000a0" stroke-width="0.35" opacity="0.3"/><path d="M34.22 13V58.8" stroke="#0000a0" stroke-width="0.35" opacity="0.3"/><path d="M37.85 13V58.8" stroke="#0000a0" stroke-width="0.35" opacity="0.3"/><path d="M41.48 13V58.8" stroke="#0000a0" stroke-width="0.35" opacity="0.3"/><path d="M45.11 13V58.8" stroke="#0000a0" stroke-width="0.35" opacity="0.3"/><path d="M48.74 13V58.8" stroke="#0000a0" stroke-width="0.35" opacity="0.3"/><path d="M52.37 13V58.8" stroke="#0000a0" stroke-width="0.35" opacity="0.3"/><path d="M56.00 13V58.8" stroke="#0000a0" stroke-width="0.35" opacity="0.3"/><path d="M59.63 13V58.8" stroke="#0000a0" stroke-width="0.35" opacity="0.3"/><path d="M63.26 13V58.8" stroke="#0000a0" stroke-width="0.35" opacity="0.3"/><path d="M66.89 13V58.8" stroke="#0000a0" stroke-width="0.35" opacity="0.3"/><path d="M70.52 13V58.8" stroke="#0000a0" stroke-width="0.35" opacity="0.3"/><path d="M74.15 13V58.8" stroke="#0000a0" stroke-width="0.35" opacity="0.3"/><path d="M77.78 13V58.8" stroke="#0000a0" stroke-width="0.35" opacity="0.3"/><path d="M81.41 13V58.8" stroke="#0000a0" stroke-width="0.35" opacity="0.3"/><path d="M85.04 13V58.8" stroke="#0000a0" stroke-width="0.35" opacity="0.3"/><path d="M88.67 13V58.8" stroke="#0000a0" stroke-width="0.35" opacity="0.3"/><path d="M92.30 13V58.8" stroke="#0000a0" stroke-width="0.35" opacity="0.3"/><path d="M95.93 13V58.8" stroke="#0000a0" stroke-width="0.35" opacity="0.3"/><path d="M99.56 13V58.8" stroke="#0000a0" stroke-width="0.35" opacity="0.3"/><path d="M103.19 13V58.8" stroke="#0000a0" stroke-width="0.35" opacity="0.3"/><path d="M106.82 13V58.8" stroke="#0000a0" stroke-width="0.35" opacity="0.3"/><path d="M110.45 13V58.8" stroke="#0000a0" stroke-width="0.35" opacity="0.3"/><path d="M114.08 13V58.8" stroke="#0000a0" stroke-width="0.35" opacity="0.3"/><path d="M117.71 13V58.8" stroke="#0000a0" stroke-width="0.35" opacity="0.3"/><path d="M121.34 13V58.8" stroke="#0000a0" stroke-width="0.35" opacity="0.3"/><path d="M124.97 13V58.8" stroke="#0000a0" stroke-width="0.35" opacity="0.3"/><path d="M128.60 13V58.8" stroke="#0000a0" stroke-width="0.35" opacity="0.3"/><path d="M132.23 13V58.8" stroke="#0000a0" stroke-width="0.35" opacity="0.3"/><path d="M135.86 13V58.8" stroke="#0000a0" stroke-width="0.35" opacity="0.3"/><path d="M18.7 56.32H139" stroke="#0000a0" stroke-width="0.35" opacity="0.22"/><path d="M18.7 53.84H139" stroke="#0000a0" stroke-width="0.35" opacity="0.22"/><path d="M18.7 51.36H139" stroke="#0000a0" stroke-width="0.35" opacity="0.22"/><path d="M18.7 48.88H139" stroke="#0000a0" stroke-width="0.35" opacity="0.22"/><path d="M18.7 46.40H139" stroke="#0000a0" stroke-width="0.35" opacity="0.22"/><path d="M18.7 43.92H139" stroke="#0000a0" stroke-width="0.35" opacity="0.22"/><path d="M18.7 41.44H139" stroke="#0000a0" stroke-width="0.35" opacity="0.22"/><path d="M18.7 38.96H139" stroke="#0000a0" stroke-width="0.35" opacity="0.22"/><path d="M18.7 36.48H139" stroke="#0000a0" stroke-width="0.35" opacity="0.22"/><path d="M18.7 34.00H139" stroke="#0000a0" stroke-width="0.35" opacity="0.22"/><path d="M18.7 31.52H139" stroke="#0000a0" stroke-width="0.35" opacity="0.22"/><path d="M18.7 29.04H139" stroke="#0000a0" stroke-width="0.35" opacity="0.22"/><path d="M18.7 26.56H139" stroke="#0000a0" stroke-width="0.35" opacity="0.22"/><path d="M18.7 24.08H139" stroke="#0000a0" stroke-width="0.35" opacity="0.22"/><path d="M18.7 21.60H139" stroke="#0000a0" stroke-width="0.35" opacity="0.22"/><path d="M18.7 19.12H139" stroke="#0000a0" stroke-width="0.35" opacity="0.22"/><path d="M18.7 16.64H139" stroke="#0000a0" stroke-width="0.35" opacity="0.22"/><path d="M18.7 14.16H139" stroke="#0000a0" stroke-width="0.35" opacity="0.22"/><path d="M22.7 11.7H33.7" stroke="#ff4020" stroke-width="0.3" opacity=".6"/><path d="M127.7 12.2H139" stroke="#ff4020" stroke-width="0.3" opacity=".6"/><path d="M18.7 58.8H140.2" stroke="#9ab" stroke-width="0.4" fill="none" opacity="0.7"/><text x="17.1" y="59.85" font-size="3.0" text-anchor="end" fill="#404040" fill-opacity="0.85" class="m" transform="rotate(0.03)">0</text><text x="17.1" y="54.89" font-size="3.0" text-anchor="end" fill="#404040" fill-opacity="0.85" class="m" transform="rotate(0.03)">20</text><text x="17.1" y="49.93" font-size="3.0" text-anchor="end" fill="#404040" fill-opacity="0.85" class="m" transform="rotate(0.03)">40</text><text x="17.1" y="44.97" font-size="3.0" text-anchor="end" fill="#404040" fill-opacity="0.85" class="m" transform="rotate(0.03)">60</text><text x="17.1" y="40.01" font-size="3.0" text-anchor="end" fill="#404040" fill-opacity="0.85" class="m" transform="rotate(0.03)">80</text><text x="17.1" y="35.05" font-size="3.0" text-anchor="end" fill="#404040" fill-opacity="0.85" class="m" transform="rotate(0.03)">100</text><text x="17.1" y="30.09" font-size="3.0" text-anchor="end" fill="#404040" fill-opacity="0.85" class="m" transform="rotate(0.03)">120</text><text x="17.1" y="25.13" font-size="3.0" text-anchor="end" fill="#404040" fill-opacity="0.85" class="m" transform="rotate(0.03)">140</text><text x="17.1" y="20.17" font-size="3.0" text-anchor="end" fill="#404040" fill-opacity="0.85" class="m" transform="rotate(0.03)">160</text><text x="17.1" y="15.21" font-size="3.0" text-anchor="end" fill="#404040" fill-opacity="0.85" class="m" transform="rotate(0.03)">180</text><text x="17.1" y="10.25" font-size="3.0" text-anchor="end" fill="#404040" fill-opacity="0.85" class="m" transform="rotate(0.03)">200</text><text x="5.1" y="35.00" font-size="3.0" text-anchor="middle" fill="#404040" fill-opacity="0.95" class="s" transform="rotate(-90 5.1 34.0)">Number of processes</text><text x="41.7" y="63.05" font-size="2.9" text-anchor="middle" fill="#404040" fill-opacity="0.9" class="s" transform="rotate(0.03)">Tue 00:00</text><text x="85.0" y="63.05" font-size="2.9" text-anchor="middle" fill="#404040" fill-opacity="0.9" class="s" transform="rotate(0.03)">Tue 12:00</text><text x="128.8" y="63.05" font-size="2.9" text-anchor="middle" fill="#404040" fill-opacity="0.9" class="s" transform="rotate(0.03)">Wed 00:00</text><path d="M145.54999999999998 3.1v22" stroke="#c4c4c4" stroke-width="0.6" stroke-dasharray="0.8 0.7" fill="none"/><text x="62.1" y="67.15" font-size="3.25" text-anchor="end" fill="#404040" fill-opacity="0.85" class="m" transform="rotate(0.03)">Cur:</text><text x="89.6" y="67.15" font-size="3.25" text-anchor="end" fill="#404040" fill-opacity="0.85" class="m" transform="rotate(0.03)">Min:</text><text x="116.5" y="67.15" font-size="3.25" text-anchor="end" fill="#404040" fill-opacity="0.85" class="m" transform="rotate(0.03)">Avg:</text><text x="143.2" y="67.15" font-size="3.25" text-anchor="end" fill="#404040" fill-opacity="0.85" class="m" transform="rotate(0.03)">Max:</text><rect x="3.7" y="68.60" width="2.1" height="2.1" fill="#0022ff"/><text x="7.9" y="70.65" font-size="3.25" text-anchor="start" fill="#404040" fill-opacity="0.85" class="m" transform="rotate(0.03)">sleeping</text><text x="62.1" y="70.65" font-size="3.25" text-anchor="end" fill="#404040" fill-opacity="0.85" class="m" transform="rotate(0.03)">189.00</text><text x="89.6" y="70.65" font-size="3.25" text-anchor="end" fill="#404040" fill-opacity="0.85" class="m" transform="rotate(0.03)">187.03</text><text x="116.5" y="70.65" font-size="3.25" text-anchor="end" fill="#404040" fill-opacity="0.85" class="m" transform="rotate(0.03)">189.76</text><text x="143.2" y="70.65" font-size="3.25" text-anchor="end" fill="#404040" fill-opacity="0.85" class="m" transform="rotate(0.03)">197.76</text><rect x="3.7" y="71.94" width="2.1" height="2.1" fill="#cc0000"/><text x="7.9" y="73.99" font-size="3.25" text-anchor="start" fill="#404040" fill-opacity="0.85" class="m" transform="rotate(0.03)">stopped</text><text x="62.1" y="73.99" font-size="3.25" text-anchor="end" fill="#404040" fill-opacity="0.85" class="m" transform="rotate(0.03)">0.00</text><text x="89.6" y="73.99" font-size="3.25" text-anchor="end" fill="#404040" fill-opacity="0.85" class="m" transform="rotate(0.03)">0.00</text><text x="116.5" y="73.99" font-size="3.25" text-anchor="end" fill="#404040" fill-opacity="0.85" class="m" transform="rotate(0.03)">0.00</text><text x="143.2" y="73.99" font-size="3.25" text-anchor="end" fill="#404040" fill-opacity="0.85" class="m" transform="rotate(0.03)">0.00</text><rect x="3.7" y="75.29" width="2.1" height="2.1" fill="#990000"/><text x="7.9" y="77.34" font-size="3.25" text-anchor="start" fill="#404040" fill-opacity="0.85" class="m" transform="rotate(0.03)">zombie</text><text x="62.1" y="77.34" font-size="3.25" text-anchor="end" fill="#404040" fill-opacity="0.85" class="m" transform="rotate(0.03)">1.00</text><text x="89.6" y="77.34" font-size="3.25" text-anchor="end" fill="#404040" fill-opacity="0.85" class="m" transform="rotate(0.03)">0.00</text><text x="116.5" y="77.34" font-size="3.25" text-anchor="end" fill="#404040" fill-opacity="0.85" class="m" transform="rotate(0.03)">224.91m</text><text x="143.2" y="77.34" font-size="3.25" text-anchor="end" fill="#404040" fill-opacity="0.85" class="m" transform="rotate(0.03)">2.00</text><rect x="3.7" y="78.63" width="2.1" height="2.1" fill="#ff0000"/><text x="7.9" y="80.68" font-size="3.25" text-anchor="start" fill="#404040" fill-opacity="0.85" class="m" transform="rotate(0.03)">dead</text><text x="62.1" y="80.68" font-size="3.25" text-anchor="end" fill="#404040" fill-opacity="0.85" class="m" transform="rotate(0.03)">0.00</text><text x="89.6" y="80.68" font-size="3.25" text-anchor="end" fill="#404040" fill-opacity="0.85" class="m" transform="rotate(0.03)">0.00</text><text x="116.5" y="80.68" font-size="3.25" text-anchor="end" fill="#404040" fill-opacity="0.85" class="m" transform="rotate(0.03)">0.00</text><text x="143.2" y="80.68" font-size="3.25" text-anchor="end" fill="#404040" fill-opacity="0.85" class="m" transform="rotate(0.03)">0.00</text><rect x="3.7" y="81.97" width="2.1" height="2.1" fill="#00aaaa"/><text x="7.9" y="84.02" font-size="3.25" text-anchor="start" fill="#404040" fill-opacity="0.85" class="m" transform="rotate(0.03)">paging</text><text x="62.1" y="84.02" font-size="3.25" text-anchor="end" fill="#404040" fill-opacity="0.85" class="m" transform="rotate(0.03)">0.00</text><text x="89.6" y="84.02" font-size="3.25" text-anchor="end" fill="#404040" fill-opacity="0.85" class="m" transform="rotate(0.03)">0.00</text><text x="116.5" y="84.02" font-size="3.25" text-anchor="end" fill="#404040" fill-opacity="0.85" class="m" transform="rotate(0.03)">0.00</text><text x="143.2" y="84.02" font-size="3.25" text-anchor="end" fill="#404040" fill-opacity="0.85" class="m" transform="rotate(0.03)">0.00</text><rect x="3.7" y="85.31" width="2.1" height="2.1" fill="#ff8000"/><text x="7.9" y="87.36" font-size="3.25" text-anchor="start" fill="#404040" fill-opacity="0.85" class="m" transform="rotate(0.03)">uninterruptible</text><text x="62.1" y="87.36" font-size="3.25" text-anchor="end" fill="#404040" fill-opacity="0.85" class="m" transform="rotate(0.03)">0.00</text><text x="89.6" y="87.36" font-size="3.25" text-anchor="end" fill="#404040" fill-opacity="0.85" class="m" transform="rotate(0.03)">0.00</text><text x="116.5" y="87.36" font-size="3.25" text-anchor="end" fill="#404040" fill-opacity="0.85" class="m" transform="rotate(0.03)">0.00</text><text x="143.2" y="87.36" font-size="3.25" text-anchor="end" fill="#404040" fill-opacity="0.85" class="m" transform="rotate(0.03)">0.00</text><rect x="3.7" y="88.66" width="2.1" height="2.1" fill="#22ff22"/><text x="7.9" y="90.71" font-size="3.25" text-anchor="start" fill="#404040" fill-opacity="0.85" class="m" transform="rotate(0.03)">runnable</text><text x="62.1" y="90.71" font-size="3.25" text-anchor="end" fill="#404040" fill-opacity="0.85" class="m" transform="rotate(0.03)">1.00</text><text x="89.6" y="90.71" font-size="3.25" text-anchor="end" fill="#404040" fill-opacity="0.85" class="m" transform="rotate(0.03)">0.00</text><text x="116.5" y="90.71" font-size="3.25" text-anchor="end" fill="#404040" fill-opacity="0.85" class="m" transform="rotate(0.03)">1.91</text><text x="143.2" y="90.71" font-size="3.25" text-anchor="end" fill="#404040" fill-opacity="0.85" class="m" transform="rotate(0.03)">2.96</text><rect x="3.7" y="92.00" width="2.1" height="2.1" fill="#c0c0c0"/><text x="7.9" y="94.05" font-size="3.25" text-anchor="start" fill="#404040" fill-opacity="0.85" class="m" transform="rotate(0.03)">total</text><text x="62.1" y="94.05" font-size="3.25" text-anchor="end" fill="#404040" fill-opacity="0.85" class="m" transform="rotate(0.03)">190.00</text><text x="89.6" y="94.05" font-size="3.25" text-anchor="end" fill="#404040" fill-opacity="0.85" class="m" transform="rotate(0.03)">189.00</text><text x="116.5" y="94.05" font-size="3.25" text-anchor="end" fill="#404040" fill-opacity="0.85" class="m" transform="rotate(0.03)">191.00</text><text x="143.2" y="94.05" font-size="3.25" text-anchor="end" fill="#404040" fill-opacity="0.85" class="m" transform="rotate(0.03)">199.76</text><text x="143.2" y="97.75" font-size="3.25" text-anchor="end" fill="#404040" fill-opacity="0.85" class="m" transform="rotate(0.03)">Last update: Wed Mar 18 03:00:07 2020</text><text x="75.8" y="98.35" font-size="1.6" text-anchor="middle" fill="#999" fill-opacity="0.8" class="s" transform="rotate(0.03)">Munin 2.0.25</text></svg></div>
<div class="g" style="left:742px;top:176.2px"><svg width="150" height="103" viewBox="0 0 150 103"><rect x="0.5" y="0.6" width="148.2" height="101.1" fill="#f0f0f0"/><path d="M1.0 101.69999999999999V1.1H148.7" stroke="#d6d6d6" stroke-width="1" fill="none"/><path d="M148.2 0.6V101.19999999999999H0.5" stroke="#a6a6a6" stroke-width="1.1" fill="none"/><text x="75.0" y="6.40" font-size="3.85" text-anchor="middle" fill="#333" fill-opacity="0.85" class="s" transform="rotate(0.03)">Disk usage in percent - by day</text><rect x="18.3" y="10.9" width="121.3" height="60.5" fill="#fff"/><path d="M19.02 10.9V71.4M22.65 10.9V71.4M26.28 10.9V71.4M29.91 10.9V71.4M33.54 10.9V71.4M37.17 10.9V71.4M40.80 10.9V71.4M44.43 10.9V71.4M48.06 10.9V71.4M51.69 10.9V71.4M55.32 10.9V71.4M58.95 10.9V71.4M62.58 10.9V71.4M66.21 10.9V71.4M69.84 10.9V71.4M73.47 10.9V71.4M77.10 10.9V71.4M80.73 10.9V71.4M84.36 10.9V71.4M87.99 10.9V71.4M91.62 10.9V71.4M95.25 10.9V71.4M98.88 10.9V71.4M102.51 10.9V71.4M106.14 10.9V71.4M109.77 10.9V71.4M113.40 10.9V71.4M117.03 10.9V71.4M120.66 10.9V71.4M124.29 10.9V71.4M127.92 10.9V71.4M131.55 10.9V71.4M135.18 10.9V71.4M138.81 10.9V71.4" stroke="#f9caca" stroke-width="0.4" fill="none" opacity="0.32"/><path d="M18.3 68.38H139.6M18.3 62.33H139.6M18.3 56.28H139.6M18.3 50.23H139.6M18.3 44.17H139.6M18.3 38.12H139.6M18.3 32.08H139.6M18.3 26.02H139.6M18.3 19.97H139.6M18.3 13.92H139.6" stroke="#f9caca" stroke-width="0.4" fill="none" opacity="0.32"/><path d="M18.3 71.40H139.6M18.3 65.35H139.6M18.3 59.30H139.6M18.3 53.25H139.6M18.3 47.20H139.6M18.3 41.15H139.6M18.3 35.10H139.6M18.3 29.05H139.6M18.3 23.00H139.6M18.3 16.95H139.6M18.3 10.90H139.6" stroke="#f4a4a4" stroke-width="0.4" fill="none" opacity="0.45"/><path d="M40.80 10.9V71.4M84.10 10.9V71.4M127.90 10.9V71.4" stroke="#f4a4a4" stroke-width="0.4" fill="none" opacity="0.33"/><path d="M18.3 16.9H139.6" stroke="#a8e4a8" stroke-width="1.5"/><path d="M18.3 24.4H139.6" stroke="#ffb088" stroke-width="1.3"/><path d="M18.3 27.8H139.6" stroke="#a8e4a8" stroke-width="1.5"/><path d="M18.3 71.3H139.6" stroke="#80a8e8" stroke-width="0.7"/><path d="M18.3 71.4H140.79999999999998" stroke="#9ab" stroke-width="0.4" fill="none" opacity="0.7"/><text x="16.7" y="72.45" font-size="3.0" text-anchor="end" fill="#404040" fill-opacity="0.85" class="m" transform="rotate(0.03)">0</text><text x="16.7" y="66.40" font-size="3.0" text-anchor="end" fill="#404040" fill-opacity="0.85" class="m" transform="rotate(0.03)">10</text><text x="16.7" y="60.35" font-size="3.0" text-anchor="end" fill="#404040" fill-opacity="0.85" class="m" transform="rotate(0.03)">20</text><text x="16.7" y="54.30" font-size="3.0" text-anchor="end" fill="#404040" fill-opacity="0.85" class="m" transform="rotate(0.03)">30</text><text x="16.7" y="48.25" font-size="3.0" text-anchor="end" fill="#404040" fill-opacity="0.85" class="m" transform="rotate(0.03)">40</text><text x="16.7" y="42.20" font-size="3.0" text-anchor="end" fill="#404040" fill-opacity="0.85" class="m" transform="rotate(0.03)">50</text><text x="16.7" y="36.15" font-size="3.0" text-anchor="end" fill="#404040" fill-opacity="0.85" class="m" transform="rotate(0.03)">60</text><text x="16.7" y="30.10" font-size="3.0" text-anchor="end" fill="#404040" fill-opacity="0.85" class="m" transform="rotate(0.03)">70</text><text x="16.7" y="24.05" font-size="3.0" text-anchor="end" fill="#404040" fill-opacity="0.85" class="m" transform="rotate(0.03)">80</text><text x="16.7" y="18.00" font-size="3.0" text-anchor="end" fill="#404040" fill-opacity="0.85" class="m" transform="rotate(0.03)">90</text><text x="16.7" y="11.95" font-size="3.0" text-anchor="end" fill="#404040" fill-opacity="0.85" class="m" transform="rotate(0.03)">100</text><text x="4.7" y="42.15" font-size="3.0" text-anchor="middle" fill="#404040" fill-opacity="0.95" class="s" transform="rotate(-90 4.700000000000001 41.150000000000006)">%</text><text x="41.3" y="75.45" font-size="2.9" text-anchor="middle" fill="#404040" fill-opacity="0.9" class="s" transform="rotate(0.03)">Tue 00:00</text><text x="84.6" y="75.45" font-size="2.9" text-anchor="middle" fill="#404040" fill-opacity="0.9" class="s" transform="rotate(0.03)">Tue 12:00</text><text x="128.4" y="75.45" font-size="2.9" text-anchor="middle" fill="#404040" fill-opacity="0.9" class="s" transform="rotate(0.03)">Wed 00:00</text><path d="M145.29999999999998 3.1v22" stroke="#c4c4c4" stroke-width="0.6" stroke-dasharray="0.8 0.7" fill="none"/><text x="53.9" y="80.55" font-size="3.25" text-anchor="end" fill="#404040" fill-opacity="0.85" class="m" transform="rotate(0.03)">Cur:</text><text x="84.9" y="80.55" font-size="3.25" text-anchor="end" fill="#404040" fill-opacity="0.85" class="m" transform="rotate(0.03)">Min:</text><text x="114.4" y="80.55" font-size="3.25" text-anchor="end" fill="#404040" fill-opacity="0.85" class="m" transform="rotate(0.03)">Avg:</text><text x="144.4" y="80.55" font-size="3.25" text-anchor="end" fill="#404040" fill-opacity="0.85" class="m" transform="rotate(0.03)">Max:</text><rect x="3.7" y="82.70" width="2.1" height="2.1" fill="#00cc00"/><text x="7.9" y="84.75" font-size="3.25" text-anchor="start" fill="#404040" fill-opacity="0.85" class="m" transform="rotate(0.03)">/</text><text x="53.9" y="84.75" font-size="3.25" text-anchor="end" fill="#404040" fill-opacity="0.85" class="m" transform="rotate(0.03)">73.34</text><text x="84.9" y="84.75" font-size="3.25" text-anchor="end" fill="#404040" fill-opacity="0.85" class="m" transform="rotate(0.03)">73.33</text><text x="114.4" y="84.75" font-size="3.25" text-anchor="end" fill="#404040" fill-opacity="0.85" class="m" transform="rotate(0.03)">73.25</text><text x="144.4" y="84.75" font-size="3.25" text-anchor="end" fill="#404040" fill-opacity="0.85" class="m" transform="rotate(0.03)">73.34</text><rect x="3.7" y="86.85" width="2.1" height="2.1" fill="#0066b3"/><text x="7.9" y="88.90" font-size="3.25" text-anchor="start" fill="#404040" fill-opacity="0.85" class="m" transform="rotate(0.03)">/dev/shm</text><text x="53.9" y="88.90" font-size="3.25" text-anchor="end" fill="#404040" fill-opacity="0.85" class="m" transform="rotate(0.03)">0.00</text><text x="84.9" y="88.90" font-size="3.25" text-anchor="end" fill="#404040" fill-opacity="0.85" class="m" transform="rotate(0.03)">0.00</text><text x="114.4" y="88.90" font-size="3.25" text-anchor="end" fill="#404040" fill-opacity="0.85" class="m" transform="rotate(0.03)">0.00</text><text x="144.4" y="88.90" font-size="3.25" text-anchor="end" fill="#404040" fill-opacity="0.85" class="m" transform="rotate(0.03)">0.00</text><rect x="3.7" y="91.00" width="2.1" height="2.1" fill="#ff8000"/><text x="7.9" y="93.05" font-size="3.25" text-anchor="start" fill="#404040" fill-opacity="0.85" class="m" transform="rotate(0.03)">/boot</text><text x="53.9" y="93.05" font-size="3.25" text-anchor="end" fill="#404040" fill-opacity="0.85" class="m" transform="rotate(0.03)">79.64</text><text x="84.9" y="93.05" font-size="3.25" text-anchor="end" fill="#404040" fill-opacity="0.85" class="m" transform="rotate(0.03)">79.64</text><text x="114.4" y="93.05" font-size="3.25" text-anchor="end" fill="#404040" fill-opacity="0.85" class="m" transform="rotate(0.03)">79.64</text><text x="144.4" y="93.05" font-size="3.25" text-anchor="end" fill="#404040" fill-opacity="0.85" class="m" transform="rotate(0.03)">79.64</text><text x="144.4" y="96.75" font-size="3.25" text-anchor="end" fill="#404040" fill-opacity="0.85" class="m" transform="rotate(0.03)">Last update: Wed Mar 18 03:00:01 2020</text><text x="75.6" y="97.35" font-size="1.6" text-anchor="middle" fill="#999" fill-opacity="0.8" class="s" transform="rotate(0.03)">Munin 2.0.25</text></svg></div>
<div class="g" style="left:242px;top:281px"><svg width="150" height="103" viewBox="0 0 150 103"><rect x="0.2" y="-0.1" width="148.2" height="101.1" fill="#f0f0f0"/><path d="M0.7 101.0V0.4H148.39999999999998" stroke="#d6d6d6" stroke-width="1" fill="none"/><path d="M147.89999999999998 -0.1V100.5H0.2" stroke="#a6a6a6" stroke-width="1.1" fill="none"/><text x="74.7" y="5.60" font-size="3.85" text-anchor="middle" fill="#333" fill-opacity="0.85" class="s" transform="rotate(0.03)">Netstat - by day</text><rect x="18.7" y="8.4" width="120.9" height="56.8" fill="#fff"/><path d="M19.42 8.4V65.2M23.05 8.4V65.2M26.68 8.4V65.2M30.31 8.4V65.2M33.94 8.4V65.2M37.57 8.4V65.2M41.20 8.4V65.2M44.83 8.4V65.2M48.46 8.4V65.2M52.09 8.4V65.2M55.72 8.4V65.2M59.35 8.4V65.2M62.98 8.4V65.2M66.61 8.4V65.2M70.24 8.4V65.2M73.87 8.4V65.2M77.50 8.4V65.2M81.13 8.4V65.2M84.76 8.4V65.2M88.39 8.4V65.2M92.02 8.4V65.2M95.65 8.4V65.2M99.28 8.4V65.2M102.91 8.4V65.2M106.54 8.4V65.2M110.17 8.4V65.2M113.80 8.4V65.2M117.43 8.4V65.2M121.06 8.4V65.2M124.69 8.4V65.2M128.32 8.4V65.2M131.95 8.4V65.2M135.58 8.4V65.2M139.21 8.4V65.2" stroke="#f9caca" stroke-width="0.4" fill="none" opacity="0.32"/><path d="M18.7 60.47H139.6M18.7 51.00H139.6M18.7 41.53H139.6M18.7 32.07H139.6M18.7 22.60H139.6M18.7 13.13H139.6" stroke="#f9caca" stroke-width="0.4" fill="none" opacity="0.32"/><path d="M18.7 65.20H139.6M18.7 55.73H139.6M18.7 46.27H139.6M18.7 36.80H139.6M18.7 27.33H139.6M18.7 17.87H139.6M18.7 8.40H139.6" stroke="#f4a4a4" stroke-width="0.4" fill="none" opacity="0.45"/><path d="M41.20 8.4V65.2M84.50 8.4V65.2M128.30 8.4V65.2" stroke="#f4a4a4" stroke-width="0.4" fill="none" opacity="0.33"/><path d="M18.7 13.9H51.7L52.7 12.9H112.7L113.7 13.9H139.6" stroke="#a590dc" stroke-width="0.65" fill="none"/><path d="M18.7 17.7H139.6" stroke="#cccc80" stroke-width="1.5"/><path d="M18.70 31.10L19.50 31.21L20.30 31.17L21.10 31.09L21.90 31.20L22.70 31.09L23.50 31.18L24.30 31.10L25.10 31.10L25.90 31.18L26.70 31.28L27.50 31.11L28.30 31.13L29.10 31.23L29.90 31.31L30.70 31.22L31.50 31.18L32.30 31.31L33.10 31.09L33.90 31.29L34.70 31.15L35.50 31.11L36.30 31.11L37.10 31.15L37.90 31.28L38.70 31.12L39.50 31.22L40.30 31.23L41.10 31.17L41.90 31.21L42.70 31.10L43.50 29.89L44.30 29.93L45.10 30.04L45.90 31.18L46.70 31.16L47.50 31.22L48.30 31.19L49.10 31.15L49.90 31.27L50.70 30.05L51.50 29.94L52.30 30.02L53.10 31.21L53.90 31.29L54.70 31.26L55.50 31.15L56.30 31.32L57.10 31.11L57.90 31.18L58.70 31.26L59.50 31.12L60.30 31.20L61.10 31.09L61.90 31.24L62.70 31.26L63.50 31.22L64.30 31.29L65.10 31.16L65.90 31.25L66.70 31.22L67.50 31.22L68.30 31.19L69.10 31.28L69.90 31.31L70.70 31.19L71.50 31.24L72.30 31.09L73.10 31.25L73.90 31.24L74.70 31.32L75.50 31.28L76.30 31.15L77.10 31.17L77.90 31.24L78.70 31.09L79.50 31.19L80.30 31.12L81.10 31.11L81.90 31.09L82.70 31.26L83.50 31.11L84.30 31.14L85.10 31.17L85.90 31.29L86.70 31.10L87.50 31.19L88.30 31.21L89.10 31.29L89.90 31.28L90.70 31.29L91.50 31.15L92.30 31.18L93.10 31.17L93.90 31.29L94.70 31.31L95.50 31.12L96.30 31.12L97.10 31.14L97.90 31.14L98.70 31.20L99.50 31.22L100.30 31.14L101.10 31.08L101.90 31.18L102.70 31.17L103.50 31.22L104.30 31.31L105.10 31.25L105.90 31.20L106.70 31.23L107.50 31.24L108.30 31.09L109.10 31.30L109.90 31.27L110.70 31.29L111.50 31.27L112.30 31.17L113.10 31.18L113.90 31.10L114.70 31.23L115.50 31.09L116.30 31.10L117.10 31.13L117.90 31.12L118.70 31.16L119.50 31.09L120.30 31.08L121.10 31.12L121.90 31.10L122.70 31.17L123.50 31.09L124.30 31.29L125.10 31.23L125.90 31.12L126.70 31.14L127.50 31.16L128.30 31.17L129.10 31.11L129.90 31.28L130.70 31.32L131.50 31.19L132.30 31.20L133.10 31.10L133.90 31.10L134.70 31.16L135.50 31.14L136.30 31.28L137.10 31.12L137.90 31.09L138.70 30.11L139.50 30.01" stroke="#4a8ad8" stroke-width="0.65" fill="none" stroke-linejoin="round" opacity="1"/><path d="M41.2 65.2V50" stroke="#f8cc50" stroke-width="0.7" opacity="0.9"/><path d="M43.7 65.2V36.3" stroke="#f8cc50" stroke-width="0.9" opacity="0.9"/><path d="M45.7 65.2V36.3" stroke="#f8cc50" stroke-width="0.9" opacity="0.9"/><path d="M51.2 65.2V34.2" stroke="#f8cc50" stroke-width="1.0" opacity="0.9"/><path d="M52.5 65.2V44.5" stroke="#f8cc50" stroke-width="1.2" opacity="0.9"/><path d="M53.7 65.2V44.5" stroke="#f8cc50" stroke-width="0.8" opacity="0.9"/><path d="M119.7 65.2V47" stroke="#f8cc50" stroke-width="0.8" opacity="0.9"/><path d="M128.29999999999998 65.2V46.5" stroke="#f8cc50" stroke-width="0.8" opacity="0.9"/><path d="M138.7 65.2V41.5" stroke="#f8cc50" stroke-width="1.0" opacity="0.9"/><path d="M18.7 65.2H140.79999999999998" stroke="#9ab" stroke-width="0.4" fill="none" opacity="0.7"/><text x="17.1" y="66.25" font-size="3.0" text-anchor="end" fill="#404040" fill-opacity="0.85" class="m" transform="rotate(0.03)">1e-04</text><text x="17.1" y="56.78" font-size="3.0" text-anchor="end" fill="#404040" fill-opacity="0.85" class="m" transform="rotate(0.03)">1e-03</text><text x="17.1" y="47.32" font-size="3.0" text-anchor="end" fill="#404040" fill-opacity="0.85" class="m" transform="rotate(0.03)">1e-02</text><text x="17.1" y="37.85" font-size="3.0" text-anchor="end" fill="#404040" fill-opacity="0.85" class="m" transform="rotate(0.03)">1e-01</text><text x="17.1" y="28.38" font-size="3.0" text-anchor="end" fill="#404040" fill-opacity="0.85" class="m" transform="rotate(0.03)">1e+00</text><text x="17.1" y="18.92" font-size="3.0" text-anchor="end" fill="#404040" fill-opacity="0.85" class="m" transform="rotate(0.03)">1e+01</text><text x="17.1" y="9.45" font-size="3.0" text-anchor="end" fill="#404040" fill-opacity="0.85" class="m" transform="rotate(0.03)"></text><text x="5.1" y="37.80" font-size="3.0" text-anchor="middle" fill="#404040" fill-opacity="0.95" class="s" transform="rotate(-90 5.1 36.800000000000004)">TCP connections</text><text x="41.7" y="69.05" font-size="2.9" text-anchor="middle" fill="#404040" fill-opacity="0.9" class="s" transform="rotate(0.03)">Tue 00:00</text><text x="85.0" y="69.05" font-size="2.9" text-anchor="middle" fill="#404040" fill-opacity="0.9" class="s" transform="rotate(0.03)">Tue 12:00</text><text x="128.8" y="69.05" font-size="2.9" text-anchor="middle" fill="#404040" fill-opacity="0.9" class="s" transform="rotate(0.03)">Wed 00:00</text><path d="M144.99999999999997 2.4v22" stroke="#c4c4c4" stroke-width="0.6" stroke-dasharray="0.8 0.7" fill="none"/><text x="58.0" y="73.95" font-size="3.25" text-anchor="end" fill="#404040" fill-opacity="0.85" class="m" transform="rotate(0.03)">Cur:</text><text x="87.0" y="73.95" font-size="3.25" text-anchor="end" fill="#404040" fill-opacity="0.85" class="m" transform="rotate(0.03)">Min:</text><text x="115.5" y="73.95" font-size="3.25" text-anchor="end" fill="#404040" fill-opacity="0.85" class="m" transform="rotate(0.03)">Avg:</text><text x="143.8" y="73.95" font-size="3.25" text-anchor="end" fill="#404040" fill-opacity="0.85" class="m" transform="rotate(0.03)">Max:</text><rect x="3.7" y="75.60" width="2.1" height="2.1" fill="#00cc00"/><text x="7.9" y="77.65" font-size="3.25" text-anchor="start" fill="#404040" fill-opacity="0.85" class="m" transform="rotate(0.03)">active</text><text x="58.0" y="77.65" font-size="3.25" text-anchor="end" fill="#404040" fill-opacity="0.85" class="m" transform="rotate(0.03)">15.85</text><text x="87.0" y="77.65" font-size="3.25" text-anchor="end" fill="#404040" fill-opacity="0.85" class="m" transform="rotate(0.03)">13.59</text><text x="115.5" y="77.65" font-size="3.25" text-anchor="end" fill="#404040" fill-opacity="0.85" class="m" transform="rotate(0.03)">15.75</text><text x="143.8" y="77.65" font-size="3.25" text-anchor="end" fill="#404040" fill-opacity="0.85" class="m" transform="rotate(0.03)">34.32</text><rect x="3.7" y="79.32" width="2.1" height="2.1" fill="#0066b3"/><text x="7.9" y="81.37" font-size="3.25" text-anchor="start" fill="#404040" fill-opacity="0.85" class="m" transform="rotate(0.03)">passive</text><text x="58.0" y="81.37" font-size="3.25" text-anchor="end" fill="#404040" fill-opacity="0.85" class="m" transform="rotate(0.03)">424.49m</text><text x="87.0" y="81.37" font-size="3.25" text-anchor="end" fill="#404040" fill-opacity="0.85" class="m" transform="rotate(0.03)">398.82m</text><text x="115.5" y="81.37" font-size="3.25" text-anchor="end" fill="#404040" fill-opacity="0.85" class="m" transform="rotate(0.03)">428.58m</text><text x="143.8" y="81.37" font-size="3.25" text-anchor="end" fill="#404040" fill-opacity="0.85" class="m" transform="rotate(0.03)">818.39m</text><rect x="3.7" y="83.05" width="2.1" height="2.1" fill="#ff8000"/><text x="7.9" y="85.10" font-size="3.25" text-anchor="start" fill="#404040" fill-opacity="0.85" class="m" transform="rotate(0.03)">failed</text><text x="58.0" y="85.10" font-size="3.25" text-anchor="end" fill="#404040" fill-opacity="0.85" class="m" transform="rotate(0.03)">13.42</text><text x="87.0" y="85.10" font-size="3.25" text-anchor="end" fill="#404040" fill-opacity="0.85" class="m" transform="rotate(0.03)">13.37</text><text x="115.5" y="85.10" font-size="3.25" text-anchor="end" fill="#404040" fill-opacity="0.85" class="m" transform="rotate(0.03)">13.33</text><text x="143.8" y="85.10" font-size="3.25" text-anchor="end" fill="#404040" fill-opacity="0.85" class="m" transform="rotate(0.03)">13.45</text><rect x="3.7" y="86.78" width="2.1" height="2.1" fill="#ffcc00"/><text x="7.9" y="88.83" font-size="3.25" text-anchor="start" fill="#404040" fill-opacity="0.85" class="m" transform="rotate(0.03)">resets</text><text x="58.0" y="88.83" font-size="3.25" text-anchor="end" fill="#404040" fill-opacity="0.85" class="m" transform="rotate(0.03)">1.32m</text><text x="87.0" y="88.83" font-size="3.25" text-anchor="end" fill="#404040" fill-opacity="0.85" class="m" transform="rotate(0.03)">0.00</text><text x="115.5" y="88.83" font-size="3.25" text-anchor="end" fill="#404040" fill-opacity="0.85" class="m" transform="rotate(0.03)">1.76m</text><text x="143.8" y="88.83" font-size="3.25" text-anchor="end" fill="#404040" fill-opacity="0.85" class="m" transform="rotate(0.03)">214.73m</text><rect x="3.7" y="90.50" width="2.1" height="2.1" fill="#330099"/><text x="7.9" y="92.55" font-size="3.25" text-anchor="start" fill="#404040" fill-opacity="0.85" class="m" transform="rotate(0.03)">established</text><text x="58.0" y="92.55" font-size="3.25" text-anchor="end" fill="#404040" fill-opacity="0.85" class="m" transform="rotate(0.03)">42.00</text><text x="87.0" y="92.55" font-size="3.25" text-anchor="end" fill="#404040" fill-opacity="0.85" class="m" transform="rotate(0.03)">37.00</text><text x="115.5" y="92.55" font-size="3.25" text-anchor="end" fill="#404040" fill-opacity="0.85" class="m" transform="rotate(0.03)">41.77</text><text x="143.8" y="92.55" font-size="3.25" text-anchor="end" fill="#404040" fill-opacity="0.85" class="m" transform="rotate(0.03)">54.62</text><text x="143.8" y="96.35" font-size="3.25" text-anchor="end" fill="#404040" fill-opacity="0.85" class="m" transform="rotate(0.03)">Last update: Wed Mar 18 03:00:03 2020</text><text x="75.3" y="96.95" font-size="1.6" text-anchor="middle" fill="#999" fill-opacity="0.8" class="s" transform="rotate(0.03)">Munin 2.0.25</text></svg></div>
<div class="g" style="left:408.8px;top:281px"><svg width="150" height="103" viewBox="0 0 150 103"><rect x="0.45" y="-0.1" width="148.2" height="101.1" fill="#f0f0f0"/><path d="M0.95 101.0V0.4H148.64999999999998" stroke="#d6d6d6" stroke-width="1" fill="none"/><path d="M148.14999999999998 -0.1V100.5H0.45" stroke="#a6a6a6" stroke-width="1.1" fill="none"/><text x="75.0" y="6.00" font-size="3.85" text-anchor="middle" fill="#333" fill-opacity="0.85" class="s" transform="rotate(0.03)">eth0 traffic - by day</text><rect x="18.3" y="10.9" width="120.9" height="65.7" fill="#fff"/><path d="M19.02 10.9V76.6M22.65 10.9V76.6M26.28 10.9V76.6M29.91 10.9V76.6M33.54 10.9V76.6M37.17 10.9V76.6M40.80 10.9V76.6M44.43 10.9V76.6M48.06 10.9V76.6M51.69 10.9V76.6M55.32 10.9V76.6M58.95 10.9V76.6M62.58 10.9V76.6M66.21 10.9V76.6M69.84 10.9V76.6M73.47 10.9V76.6M77.10 10.9V76.6M80.73 10.9V76.6M84.36 10.9V76.6M87.99 10.9V76.6M91.62 10.9V76.6M95.25 10.9V76.6M98.88 10.9V76.6M102.51 10.9V76.6M106.14 10.9V76.6M109.77 10.9V76.6M113.40 10.9V76.6M117.03 10.9V76.6M120.66 10.9V76.6M124.29 10.9V76.6M127.92 10.9V76.6M131.55 10.9V76.6M135.18 10.9V76.6M138.81 10.9V76.6" stroke="#f9caca" stroke-width="0.4" fill="none" opacity="0.32"/><path d="M18.3 20.40H139.2M18.3 32.80H139.2M18.3 45.20H139.2M18.3 57.60H139.2M18.3 70.00H139.2" stroke="#f9caca" stroke-width="0.4" fill="none" opacity="0.32"/><path d="M18.3 76.20H139.2M18.3 63.80H139.2M18.3 51.40H139.2M18.3 39.00H139.2M18.3 26.60H139.2M18.3 14.20H139.2" stroke="#f4a4a4" stroke-width="0.4" fill="none" opacity="0.45"/><path d="M40.80 10.9V76.6M84.10 10.9V76.6M127.90 10.9V76.6" stroke="#f4a4a4" stroke-width="0.4" fill="none" opacity="0.33"/><path d="M18.3 14.4H139.2" stroke="#222" stroke-width="0.5"/><path d="M18.3 14.1H139.2" stroke="#10c020" stroke-width="1.1" stroke-dasharray="1.6 0.8"/><path d="M18.30 66.82L18.80 67.31L19.30 66.97L19.80 65.96L20.30 66.71L20.80 65.50L21.30 67.16L21.80 66.44L22.30 67.30L22.80 66.08L23.30 65.79L23.80 66.49L24.30 66.41L24.80 66.70L25.30 66.65L25.80 67.03L26.30 66.97L26.80 65.73L27.30 65.83L27.80 66.18L28.30 67.07L28.80 65.74L29.30 66.38L29.80 66.91L30.30 67.48L30.80 67.04L31.30 66.34L31.80 65.73L32.30 66.63L32.80 66.06L33.30 67.08L33.80 66.89L34.30 66.07L34.80 67.44L35.30 65.48L35.80 65.52L36.30 66.33L36.80 66.04L37.30 66.36L37.80 67.47L38.30 66.64L38.80 65.30L39.30 67.30L39.80 66.06L40.30 66.71L40.80 67.14L41.30 65.56L41.80 66.15L42.30 66.87L42.80 65.74L43.30 67.26L43.80 66.25L44.30 66.70L44.80 65.49L45.30 67.38L45.80 66.89L46.30 66.32L46.80 66.94L47.30 65.49L47.80 65.65L48.30 67.48L48.80 65.36L49.30 66.60L49.80 66.32L50.30 66.74L50.80 66.65L51.30 66.61L51.80 66.34L52.30 67.36L52.80 65.64L53.30 66.51L53.80 65.35L54.30 67.06L54.80 66.90L55.30 65.53L55.80 66.95L56.30 65.61L56.80 67.47L57.30 65.73L57.80 67.22L58.30 65.36L58.80 65.77L59.30 66.40L59.80 66.98L60.30 66.02L60.80 66.50L61.30 67.14L61.80 72.03L62.30 73.68L62.80 73.14L63.30 74.07L63.80 70.72L64.30 73.36L64.80 73.28L65.30 72.13L65.80 71.91L66.30 70.47L66.80 72.88L67.30 73.05L67.80 72.14L68.30 70.58L68.80 71.40L69.30 72.35L69.80 71.00L70.30 73.71L70.80 71.18L71.30 73.19L71.80 71.79L72.30 73.39L72.80 74.40L73.30 64.06L73.80 62.55L74.30 63.08L74.80 63.02L75.30 62.96L75.80 62.80L76.30 63.58L76.80 63.04L77.30 62.57L77.80 62.77L78.30 62.37L78.80 63.81L79.30 64.17L79.80 63.52L80.30 62.91L80.80 62.66L81.30 62.40L81.80 63.13L82.30 63.74L82.80 62.31L83.30 64.05L83.80 62.46L84.30 63.57L84.80 62.59L85.30 63.65L85.80 64.29L86.30 62.99L86.80 63.03L87.30 62.88L87.80 62.30L88.30 62.91L88.80 62.84L89.30 63.11L89.80 63.65L90.30 66.15L90.80 66.44L91.30 65.95L91.80 67.41L92.30 65.55L92.80 67.32L93.30 65.80L93.80 67.23L94.30 65.48L94.80 65.90L95.30 67.29L95.80 65.70L96.30 66.96L96.80 67.10L97.30 67.17L97.80 66.79L98.30 67.38L98.80 66.19L99.30 66.48L99.80 66.43L100.30 66.39L100.80 66.02L101.30 65.91L101.80 67.06L102.30 65.70L102.80 67.27L103.30 65.89L103.80 65.34L104.30 65.49L104.80 65.87L105.30 66.64L105.80 65.79L106.30 65.88L106.80 65.57L107.30 65.33L107.80 67.49L108.30 66.22L108.80 67.31L109.30 66.67L109.80 65.40L110.30 66.86L110.80 67.36L111.30 67.43L111.80 65.88L112.30 65.70L112.80 67.35L113.30 66.68L113.80 66.47L114.30 65.75L114.80 66.28L115.30 66.78L115.80 65.90L116.30 67.07L116.80 67.49L117.30 65.38L117.80 65.34L118.30 66.41L118.80 67.45L119.30 66.43L119.80 65.84L120.30 66.28L120.80 66.75L121.30 66.73L121.80 66.74L122.30 66.50L122.80 67.26L123.30 67.43L123.80 65.98L124.30 65.77L124.80 65.81L125.30 65.74L125.80 67.24L126.30 66.90L126.80 65.61L127.30 67.48L127.80 67.46L128.30 67.14L128.80 65.33L129.30 66.68L129.80 67.24L130.30 66.25L130.80 65.42L131.30 66.76L131.80 66.14L132.30 66.41L132.80 67.44L133.30 66.62L133.80 66.82L134.30 65.40L134.80 65.71L135.30 65.89L135.80 65.31L136.30 66.10L136.80 66.02L137.30 67.47L137.80 66.01L138.30 65.38L138.80 67.24" stroke="#18c828" stroke-width="0.8" fill="none" stroke-linejoin="round" opacity="1"/><path d="M18.30 65.92L19.00 65.84L19.70 66.20L20.40 65.60L21.10 66.07L21.80 66.97L22.50 66.00L23.20 67.26L23.90 65.62L24.60 67.36L25.30 65.75L26.00 66.81L26.70 66.35L27.40 66.12L28.10 66.91L28.80 65.60L29.50 67.70L30.20 67.45L30.90 65.77L31.60 67.54L32.30 67.28L33.00 66.83L33.70 67.23L34.40 67.13L35.10 66.59L35.80 66.08L36.50 66.88L37.20 65.75L37.90 67.38L38.60 67.12L39.30 66.63L40.00 66.43L40.70 67.08L41.40 66.61L42.10 67.58L42.80 67.21L43.50 66.76L44.20 67.35L44.90 65.44L45.60 67.05L46.30 67.32L47.00 67.11L47.70 67.69L48.40 66.94L49.10 65.60L49.80 65.50L50.50 66.93L51.20 67.70L51.90 66.30L52.60 66.48L53.30 65.52L54.00 65.45L54.70 66.68L55.40 65.99L56.10 66.03L56.80 66.50L57.50 65.57L58.20 67.64L58.90 67.55L59.60 65.62L60.30 66.66L61.00 67.19L61.70 73.31L62.40 72.77L63.10 72.54L63.80 72.86L64.50 72.37L65.20 73.05L65.90 71.84L66.60 72.13L67.30 72.58L68.00 73.37L68.70 71.68L69.40 73.75L70.10 70.93L70.80 73.10L71.50 72.00L72.20 74.47L72.90 66.72L73.60 62.95L74.30 62.41L75.00 63.34L75.70 62.90L76.40 62.38L77.10 63.42L77.80 64.59L78.50 64.59L79.20 63.13L79.90 64.40L80.60 64.43L81.30 62.38L82.00 62.42L82.70 63.99L83.40 62.83L84.10 63.06L84.80 63.65L85.50 63.72L86.20 62.87L86.90 62.47L87.60 63.08L88.30 63.39L89.00 64.30L89.70 63.15L90.40 65.78L91.10 67.68L91.80 67.04L92.50 66.37L93.20 67.15L93.90 66.40L94.60 66.30L95.30 65.69L96.00 66.20L96.70 66.18L97.40 66.21L98.10 66.36L98.80 67.66L99.50 65.87L100.20 65.43L100.90 67.18L101.60 66.01L102.30 65.56L103.00 66.34L103.70 67.49L104.40 65.58L105.10 67.62L105.80 67.21L106.50 67.45L107.20 66.07L107.90 65.52L108.60 66.99L109.30 66.92L110.00 65.76L110.70 67.73L111.40 66.45L112.10 66.16L112.80 67.26L113.50 67.28L114.20 66.43L114.90 65.47L115.60 67.23L116.30 66.36L117.00 67.50L117.70 66.73L118.40 65.89L119.10 65.59L119.80 67.64L120.50 66.39L121.20 66.88L121.90 65.73L122.60 67.49L123.30 66.57L124.00 67.59L124.70 66.72L125.40 65.81L126.10 66.40L126.80 66.08L127.50 66.01L128.20 67.17L128.90 66.97L129.60 66.37L130.30 65.97L131.00 66.56L131.70 67.01L132.40 65.69L133.10 66.94L133.80 65.58L134.50 66.60L135.20 67.35L135.90 66.72L136.60 66.49L137.30 66.20L138.00 67.22L138.70 66.43" stroke="#50d860" stroke-width="0.4" fill="none" stroke-linejoin="round" opacity="0.8"/><path d="M86.8 63V72.5" stroke="#18c828" stroke-width="0.6"/><path d="M18.3 76.6H140.39999999999998" stroke="#9ab" stroke-width="0.4" fill="none" opacity="0.7"/><text x="16.7" y="77.25" font-size="3.0" text-anchor="end" fill="#404040" fill-opacity="0.85" class="m" transform="rotate(0.03)">-500</text><text x="16.7" y="64.85" font-size="3.0" text-anchor="end" fill="#404040" fill-opacity="0.85" class="m" transform="rotate(0.03)">-400</text><text x="16.7" y="52.45" font-size="3.0" text-anchor="end" fill="#404040" fill-opacity="0.85" class="m" transform="rotate(0.03)">-300</text><text x="16.7" y="40.05" font-size="3.0" text-anchor="end" fill="#404040" fill-opacity="0.85" class="m" transform="rotate(0.03)">-200</text><text x="16.7" y="27.65" font-size="3.0" text-anchor="end" fill="#404040" fill-opacity="0.85" class="m" transform="rotate(0.03)">-100</text><text x="16.7" y="15.25" font-size="3.0" text-anchor="end" fill="#404040" fill-opacity="0.85" class="m" transform="rotate(0.03)">0</text><text x="4.7" y="44.75" font-size="3.0" text-anchor="middle" fill="#404040" fill-opacity="0.95" class="s" transform="rotate(-90 4.700000000000001 43.75)">bits in (-) / out (+) per second</text><text x="41.3" y="80.75" font-size="2.9" text-anchor="middle" fill="#404040" fill-opacity="0.9" class="s" transform="rotate(0.03)">Tue 00:00</text><text x="84.6" y="80.75" font-size="2.9" text-anchor="middle" fill="#404040" fill-opacity="0.9" class="s" transform="rotate(0.03)">Tue 12:00</text><text x="128.4" y="80.75" font-size="2.9" text-anchor="middle" fill="#404040" fill-opacity="0.9" class="s" transform="rotate(0.03)">Wed 00:00</text><path d="M145.24999999999997 2.4v22" stroke="#c4c4c4" stroke-width="0.6" stroke-dasharray="0.8 0.7" fill="none"/><text x="42.7" y="86.55" font-size="3.25" text-anchor="end" fill="#404040" fill-opacity="0.85" class="m" transform="rotate(0.03)">Cur (-/+)</text><text x="75.8" y="86.55" font-size="3.25" text-anchor="end" fill="#404040" fill-opacity="0.85" class="m" transform="rotate(0.03)">Min (-/+)</text><text x="108.9" y="86.55" font-size="3.25" text-anchor="end" fill="#404040" fill-opacity="0.85" class="m" transform="rotate(0.03)">Avg (-/+)</text><text x="141.9" y="86.55" font-size="3.25" text-anchor="end" fill="#404040" fill-opacity="0.85" class="m" transform="rotate(0.03)">Max (-/+)</text><rect x="3.7" y="89.10" width="2.1" height="2.1" fill="#00cc00"/><text x="7.9" y="91.15" font-size="3.25" text-anchor="start" fill="#404040" fill-opacity="0.85" class="m" transform="rotate(0.03)">bps</text><text x="46.8" y="91.15" font-size="3.25" text-anchor="end" fill="#404040" fill-opacity="0.85" class="m" transform="rotate(0.03)">417.57 / 79.29m</text><text x="77.8" y="91.15" font-size="3.25" text-anchor="end" fill="#404040" fill-opacity="0.85" class="m" transform="rotate(0.03)">304.34 /  0.00</text><text x="109.5" y="91.15" font-size="3.25" text-anchor="end" fill="#404040" fill-opacity="0.85" class="m" transform="rotate(0.03)">426.09 /  1.25</text><text x="144.0" y="91.15" font-size="3.25" text-anchor="end" fill="#404040" fill-opacity="0.85" class="m" transform="rotate(0.03)">494.73 / 82.49</text><text x="144.0" y="95.25" font-size="3.25" text-anchor="end" fill="#404040" fill-opacity="0.85" class="m" transform="rotate(0.03)">Last update: Wed Mar 18 03:00:09 2020</text><text x="75.5" y="95.85" font-size="1.6" text-anchor="middle" fill="#999" fill-opacity="0.8" class="s" transform="rotate(0.03)">Munin 2.0.25</text></svg></div>
<div class="g" style="left:575px;top:281px"><svg width="150" height="103" viewBox="0 0 150 103"><rect x="0.75" y="-0.1" width="148.2" height="101.1" fill="#f0f0f0"/><path d="M1.25 101.0V0.4H148.95" stroke="#d6d6d6" stroke-width="1" fill="none"/><path d="M148.45 -0.1V100.5H0.75" stroke="#a6a6a6" stroke-width="1.1" fill="none"/><text x="75.2" y="6.00" font-size="3.85" text-anchor="middle" fill="#333" fill-opacity="0.85" class="s" transform="rotate(0.03)">Swap in/out - by day</text><rect x="18.7" y="10.0" width="120.9" height="66.6" fill="#fff"/><path d="M19.42 10.0V76.6M23.05 10.0V76.6M26.68 10.0V76.6M30.31 10.0V76.6M33.94 10.0V76.6M37.57 10.0V76.6M41.20 10.0V76.6M44.83 10.0V76.6M48.46 10.0V76.6M52.09 10.0V76.6M55.72 10.0V76.6M59.35 10.0V76.6M62.98 10.0V76.6M66.61 10.0V76.6M70.24 10.0V76.6M73.87 10.0V76.6M77.50 10.0V76.6M81.13 10.0V76.6M84.76 10.0V76.6M88.39 10.0V76.6M92.02 10.0V76.6M95.65 10.0V76.6M99.28 10.0V76.6M102.91 10.0V76.6M106.54 10.0V76.6M110.17 10.0V76.6M113.80 10.0V76.6M117.43 10.0V76.6M121.06 10.0V76.6M124.69 10.0V76.6M128.32 10.0V76.6M131.95 10.0V76.6M135.58 10.0V76.6M139.21 10.0V76.6" stroke="#f9caca" stroke-width="0.4" fill="none" opacity="0.32"/><path d="M18.7 18.00H139.6M18.7 31.00H139.6M18.7 44.00H139.6M18.7 57.00H139.6M18.7 70.00H139.6" stroke="#f9caca" stroke-width="0.4" fill="none" opacity="0.32"/><path d="M18.7 76.20H139.6M18.7 63.20H139.6M18.7 50.40H139.6M18.7 37.40H139.6M18.7 24.50H139.6M18.7 11.50H139.6" stroke="#f4a4a4" stroke-width="0.4" fill="none" opacity="0.45"/><path d="M41.20 10.0V76.6M84.50 10.0V76.6M128.30 10.0V76.6" stroke="#f4a4a4" stroke-width="0.4" fill="none" opacity="0.33"/><path d="M18.7 11.6H139.6" stroke="#777" stroke-width="0.8"/><path d="M113.8 11.6V63.8" stroke="#30d040" stroke-width="1.1"/><path d="M52.8 11.6V15" stroke="#30d040" stroke-width="0.9"/><path d="M18.7 76.6H140.79999999999998" stroke="#9ab" stroke-width="0.4" fill="none" opacity="0.7"/><text x="17.1" y="77.25" font-size="3.0" text-anchor="end" fill="#404040" fill-opacity="0.85" class="m" transform="rotate(0.03)">-50 m</text><text x="17.1" y="64.25" font-size="3.0" text-anchor="end" fill="#404040" fill-opacity="0.85" class="m" transform="rotate(0.03)">-40 m</text><text x="17.1" y="51.45" font-size="3.0" text-anchor="end" fill="#404040" fill-opacity="0.85" class="m" transform="rotate(0.03)">-30 m</text><text x="17.1" y="38.45" font-size="3.0" text-anchor="end" fill="#404040" fill-opacity="0.85" class="m" transform="rotate(0.03)">-20 m</text><text x="17.1" y="25.55" font-size="3.0" text-anchor="end" fill="#404040" fill-opacity="0.85" class="m" transform="rotate(0.03)">-10 m</text><text x="17.1" y="12.55" font-size="3.0" text-anchor="end" fill="#404040" fill-opacity="0.85" class="m" transform="rotate(0.03)">0</text><text x="5.1" y="44.30" font-size="3.0" text-anchor="middle" fill="#404040" fill-opacity="0.95" class="s" transform="rotate(-90 5.1 43.3)">pages per second in (-) / out (+)</text><text x="41.7" y="80.75" font-size="2.9" text-anchor="middle" fill="#404040" fill-opacity="0.9" class="s" transform="rotate(0.03)">Tue 00:00</text><text x="85.0" y="80.75" font-size="2.9" text-anchor="middle" fill="#404040" fill-opacity="0.9" class="s" transform="rotate(0.03)">Tue 12:00</text><text x="128.8" y="80.75" font-size="2.9" text-anchor="middle" fill="#404040" fill-opacity="0.9" class="s" transform="rotate(0.03)">Wed 00:00</text><path d="M145.54999999999998 2.4v22" stroke="#c4c4c4" stroke-width="0.6" stroke-dasharray="0.8 0.7" fill="none"/><text x="44.2" y="86.55" font-size="3.25" text-anchor="end" fill="#404040" fill-opacity="0.85" class="m" transform="rotate(0.03)">Cur (-/+)</text><text x="77.2" y="86.55" font-size="3.25" text-anchor="end" fill="#404040" fill-opacity="0.85" class="m" transform="rotate(0.03)">Min (-/+)</text><text x="109.7" y="86.55" font-size="3.25" text-anchor="end" fill="#404040" fill-opacity="0.85" class="m" transform="rotate(0.03)">Avg (-/+)</text><text x="142.4" y="86.55" font-size="3.25" text-anchor="end" fill="#404040" fill-opacity="0.85" class="m" transform="rotate(0.03)">Max (-/+)</text><rect x="3.7" y="89.10" width="2.1" height="2.1" fill="#00cc00"/><text x="7.9" y="91.15" font-size="3.25" text-anchor="start" fill="#404040" fill-opacity="0.85" class="m" transform="rotate(0.03)">swap</text><text x="46.6" y="91.15" font-size="3.25" text-anchor="end" fill="#404040" fill-opacity="0.85" class="m" transform="rotate(0.03)">0.00 /  0.00</text><text x="78.7" y="91.15" font-size="3.25" text-anchor="end" fill="#404040" fill-opacity="0.85" class="m" transform="rotate(0.03)">0.00 /  0.00</text><text x="110.7" y="91.15" font-size="3.25" text-anchor="end" fill="#404040" fill-opacity="0.85" class="m" transform="rotate(0.03)">2.09m/  0.00</text><text x="143.2" y="91.15" font-size="3.25" text-anchor="end" fill="#404040" fill-opacity="0.85" class="m" transform="rotate(0.03)">409.67m/  0.00</text><text x="143.2" y="95.25" font-size="3.25" text-anchor="end" fill="#404040" fill-opacity="0.85" class="m" transform="rotate(0.03)">Last update: Wed Mar 18 03:00:04 2020</text><text x="75.8" y="95.85" font-size="1.6" text-anchor="middle" fill="#999" fill-opacity="0.8" class="s" transform="rotate(0.03)">Munin 2.0.25</text></svg></div>
<div class="g" style="left:742px;top:281px"><svg width="150" height="103" viewBox="0 0 150 103"><rect x="0.5" y="-0.1" width="148.2" height="101.1" fill="#f0f0f0"/><path d="M1.0 101.0V0.4H148.7" stroke="#d6d6d6" stroke-width="1" fill="none"/><path d="M148.2 -0.1V100.5H0.5" stroke="#a6a6a6" stroke-width="1.1" fill="none"/><text x="75.0" y="6.00" font-size="3.85" text-anchor="middle" fill="#333" fill-opacity="0.85" class="s" transform="rotate(0.03)">Disk IOs per device - by day</text><rect x="18.3" y="10.5" width="121.3" height="66.1" fill="#fff"/><path d="M19.02 10.5V76.6M22.65 10.5V76.6M26.28 10.5V76.6M29.91 10.5V76.6M33.54 10.5V76.6M37.17 10.5V76.6M40.80 10.5V76.6M44.43 10.5V76.6M48.06 10.5V76.6M51.69 10.5V76.6M55.32 10.5V76.6M58.95 10.5V76.6M62.58 10.5V76.6M66.21 10.5V76.6M69.84 10.5V76.6M73.47 10.5V76.6M77.10 10.5V76.6M80.73 10.5V76.6M84.36 10.5V76.6M87.99 10.5V76.6M91.62 10.5V76.6M95.25 10.5V76.6M98.88 10.5V76.6M102.51 10.5V76.6M106.14 10.5V76.6M109.77 10.5V76.6M113.40 10.5V76.6M117.03 10.5V76.6M120.66 10.5V76.6M124.29 10.5V76.6M127.92 10.5V76.6M131.55 10.5V76.6M135.18 10.5V76.6M138.81 10.5V76.6" stroke="#f9caca" stroke-width="0.4" fill="none" opacity="0.32"/><path d="M18.3 15.10H139.6M18.3 22.30H139.6M18.3 29.50H139.6M18.3 36.70H139.6M18.3 43.90H139.6M18.3 51.10H139.6M18.3 58.30H139.6M18.3 65.50H139.6M18.3 72.70H139.6" stroke="#f9caca" stroke-width="0.4" fill="none" opacity="0.32"/><path d="M18.3 70.40H139.6M18.3 63.20H139.6M18.3 56.00H139.6M18.3 48.70H139.6M18.3 41.50H139.6M18.3 34.30H139.6M18.3 26.60H139.6M18.3 19.20H139.6M18.3 11.50H139.6" stroke="#f4a4a4" stroke-width="0.4" fill="none" opacity="0.45"/><path d="M40.80 10.5V76.6M84.10 10.5V76.6M127.90 10.5V76.6" stroke="#f4a4a4" stroke-width="0.4" fill="none" opacity="0.33"/><path d="M18.30 36.63L18.80 36.45L19.30 28.46L19.80 29.93L20.30 36.53L20.80 36.05L21.30 38.26L21.80 37.00L22.30 37.94L22.80 36.55L23.30 36.70L23.80 37.96L24.30 37.30L24.80 37.49L25.30 36.94L25.80 37.79L26.30 37.38L26.80 30.05L27.30 36.24L27.80 38.33L28.30 37.00L28.80 37.68L29.30 37.12L29.80 36.81L30.30 38.12L30.80 38.52L31.30 36.33L31.80 37.11L32.30 37.99L32.80 38.09L33.30 38.52L33.80 37.27L34.30 30.29L34.80 38.41L35.30 37.37L35.80 37.22L36.30 37.17L36.80 38.04L37.30 36.58L37.80 36.40L38.30 38.53L38.80 36.28L39.30 38.15L39.80 37.82L40.30 38.20L40.80 38.33L41.30 19.30L41.80 36.00L42.30 36.33L42.80 37.48L43.30 36.10L43.80 37.86L44.30 38.50L44.80 37.63L45.30 37.37L45.80 37.14L46.30 37.99L46.80 36.26L47.30 36.78L47.80 38.45L48.30 36.50L48.80 26.65L49.30 36.69L49.80 35.02L50.30 34.95L50.80 36.52L51.30 38.30L51.80 33.66L52.30 36.96L52.80 37.81L53.30 36.90L53.80 24.50L54.30 36.18L54.80 36.52L55.30 36.50L55.80 26.43L56.30 37.59L56.80 37.26L57.30 36.15L57.80 38.26L58.30 37.55L58.80 37.08L59.30 37.85L59.80 36.48L60.30 37.17L60.80 37.85L61.30 36.82L61.80 36.29L62.30 36.21L62.80 36.43L63.30 29.46L63.80 37.36L64.30 37.22L64.80 36.81L65.30 37.89L65.80 38.18L66.30 38.56L66.80 37.15L67.30 36.28L67.80 36.20L68.30 36.21L68.80 37.09L69.30 38.30L69.80 37.46L70.30 28.64L70.80 38.00L71.30 36.80L71.80 38.09L72.30 36.23L72.80 37.83L73.30 36.51L73.80 37.41L74.30 37.16L74.80 36.84L75.30 37.92L75.80 37.23L76.30 37.64L76.80 36.64L77.30 37.63L77.80 28.63L78.30 37.21L78.80 38.09L79.30 36.16L79.80 36.51L80.30 36.16L80.80 37.57L81.30 36.94L81.80 36.87L82.30 38.48L82.80 36.11L83.30 37.94L83.80 37.79L84.30 38.40L84.80 29.66L85.30 37.55L85.80 38.09L86.30 38.46L86.80 36.17L87.30 38.15L87.80 36.28L88.30 37.86L88.80 37.21L89.30 38.02L89.80 38.05L90.30 38.38L90.80 38.12L91.30 36.35L91.80 37.29L92.30 30.29L92.80 36.79L93.30 37.80L93.80 36.39L94.30 36.61L94.80 38.24L95.30 37.20L95.80 38.04L96.30 37.55L96.80 37.33L97.30 37.02L97.80 36.42L98.30 37.06L98.80 37.69L99.30 29.13L99.80 36.42L100.30 37.11L100.80 36.27L101.30 36.19L101.80 37.62L102.30 36.54L102.80 37.09L103.30 38.57L103.80 38.53L104.30 36.45L104.80 36.35L105.30 37.20L105.80 38.32L106.30 36.61L106.80 29.82L107.30 37.97L107.80 38.03L108.30 36.76L108.80 36.73L109.30 36.70L109.80 36.66L110.30 36.68L110.80 37.14L111.30 36.48L111.80 36.61L112.30 36.73L112.80 38.36L113.30 36.49L113.80 28.25L114.30 36.64L114.80 37.37L115.30 37.69L115.80 36.26L116.30 37.21L116.80 36.10L117.30 36.01L117.80 38.30L118.30 36.60L118.80 37.17L119.30 36.97L119.80 38.28L120.30 36.61L120.80 36.13L121.30 29.98L121.80 36.50L122.30 36.20L122.80 37.33L123.30 36.46L123.80 37.57L124.30 38.01L124.80 37.73L125.30 36.02L125.80 37.66L126.30 37.85L126.80 36.91L127.30 36.10L127.80 36.88L128.30 19.30L128.80 36.10L129.30 37.90L129.80 38.38L130.30 38.12L130.80 38.13L131.30 37.06L131.80 36.97L132.30 37.61L132.80 36.20L133.30 36.08L133.80 37.29L134.30 37.26L134.80 37.06L135.30 38.07L135.80 27.96L136.30 37.39L136.80 37.70L137.30 37.03L137.80 36.71L138.30 38.57L138.80 24.50L139.30 37.09" stroke="#38cc48" stroke-width="0.42" fill="none" stroke-linejoin="round" opacity="1"/><path d="M18.30 36.99L18.90 38.24L19.50 38.49L20.10 37.65L20.70 36.93L21.30 38.28L21.90 38.34L22.50 38.06L23.10 37.60L23.70 37.63L24.30 38.60L24.90 37.68L25.50 37.18L26.10 37.10L26.70 37.06L27.30 37.94L27.90 37.56L28.50 38.29L29.10 37.13L29.70 36.99L30.30 37.16L30.90 38.35L31.50 37.61L32.10 37.93L32.70 38.57L33.30 38.23L33.90 37.21L34.50 37.53L35.10 37.19L35.70 37.21L36.30 37.02L36.90 37.59L37.50 38.26L38.10 38.33L38.70 38.35L39.30 37.44L39.90 38.41L40.50 36.98L41.10 38.54L41.70 37.47L42.30 37.99L42.90 38.05L43.50 37.06L44.10 38.18L44.70 38.14L45.30 38.50L45.90 38.05L46.50 38.44L47.10 38.02L47.70 38.01L48.30 37.25L48.90 37.75L49.50 37.92L50.10 36.98L50.70 38.59L51.30 37.18L51.90 37.55L52.50 37.17L53.10 38.65L53.70 38.37L54.30 37.25L54.90 38.49L55.50 38.42L56.10 38.11L56.70 38.10L57.30 37.48L57.90 37.60L58.50 37.72L59.10 38.43L59.70 38.30L60.30 38.07L60.90 37.45L61.50 37.35L62.10 37.60L62.70 37.56L63.30 37.81L63.90 37.22L64.50 36.91L65.10 38.68L65.70 37.74L66.30 37.70L66.90 38.01L67.50 38.37L68.10 38.41L68.70 38.36L69.30 37.62L69.90 37.02L70.50 37.55L71.10 37.56L71.70 38.34L72.30 37.81L72.90 38.08L73.50 36.97L74.10 37.13L74.70 38.56L75.30 37.46L75.90 38.20L76.50 37.04L77.10 38.25L77.70 38.51L78.30 38.07L78.90 38.31L79.50 36.95L80.10 37.02L80.70 38.01L81.30 38.15L81.90 37.10L82.50 37.14L83.10 38.49L83.70 37.42L84.30 38.36L84.90 38.33L85.50 38.14L86.10 38.20L86.70 37.30L87.30 38.40L87.90 38.00L88.50 37.35L89.10 37.48L89.70 38.00L90.30 38.53L90.90 37.72L91.50 37.36L92.10 38.64L92.70 37.76L93.30 37.97L93.90 38.01L94.50 37.33L95.10 37.57L95.70 37.26L96.30 37.63L96.90 38.05L97.50 37.40L98.10 37.49L98.70 37.58L99.30 38.33L99.90 37.38L100.50 38.28L101.10 36.99L101.70 38.44L102.30 38.64L102.90 37.72L103.50 37.84L104.10 38.14L104.70 38.51L105.30 37.35L105.90 37.86L106.50 38.44L107.10 38.23L107.70 37.57L108.30 37.58L108.90 37.56L109.50 37.16L110.10 37.50L110.70 37.05L111.30 37.31L111.90 38.01L112.50 38.62L113.10 37.43L113.70 37.83L114.30 37.46L114.90 38.64L115.50 38.47L116.10 38.57L116.70 38.51L117.30 38.22L117.90 38.24L118.50 37.30L119.10 37.42L119.70 38.03L120.30 37.65L120.90 37.56L121.50 36.99L122.10 37.78L122.70 38.00L123.30 36.98L123.90 37.00L124.50 37.92L125.10 37.45L125.70 37.84L126.30 37.86L126.90 37.64L127.50 37.44L128.10 37.14L128.70 37.56L129.30 38.39L129.90 37.19L130.50 36.93L131.10 38.34L131.70 38.17L132.30 37.71L132.90 37.01L133.50 37.16L134.10 38.10L134.70 37.39L135.30 38.36L135.90 38.64L136.50 37.00L137.10 38.38L137.70 38.51L138.30 37.97L138.90 37.94L139.50 37.98" stroke="#40d050" stroke-width="0.55" fill="none" stroke-linejoin="round" opacity="0.9"/><path d="M18.3 63.2H139.6" stroke="#888" stroke-width="0.55"/><path d="M26.700000000000003 63.2V76.4" stroke="#30d040" stroke-width="1.1"/><path d="M21.3 63.2V66.5" stroke="#30d040" stroke-width="0.7"/><path d="M18.900000000000002 63.2V69" stroke="#30d040" stroke-width="0.6"/><path d="M18.3 76.6H140.79999999999998" stroke="#9ab" stroke-width="0.4" fill="none" opacity="0.7"/><text x="16.7" y="71.45" font-size="3.0" text-anchor="end" fill="#404040" fill-opacity="0.85" class="m" transform="rotate(0.03)">-10</text><text x="16.7" y="64.25" font-size="3.0" text-anchor="end" fill="#404040" fill-opacity="0.85" class="m" transform="rotate(0.03)">0</text><text x="16.7" y="57.05" font-size="3.0" text-anchor="end" fill="#404040" fill-opacity="0.85" class="m" transform="rotate(0.03)">10</text><text x="16.7" y="49.75" font-size="3.0" text-anchor="end" fill="#404040" fill-opacity="0.85" class="m" transform="rotate(0.03)">20</text><text x="16.7" y="42.55" font-size="3.0" text-anchor="end" fill="#404040" fill-opacity="0.85" class="m" transform="rotate(0.03)">30</text><text x="16.7" y="35.35" font-size="3.0" text-anchor="end" fill="#404040" fill-opacity="0.85" class="m" transform="rotate(0.03)">40</text><text x="16.7" y="27.65" font-size="3.0" text-anchor="end" fill="#404040" fill-opacity="0.85" class="m" transform="rotate(0.03)">50</text><text x="16.7" y="20.25" font-size="3.0" text-anchor="end" fill="#404040" fill-opacity="0.85" class="m" transform="rotate(0.03)">60</text><text x="16.7" y="12.55" font-size="3.0" text-anchor="end" fill="#404040" fill-opacity="0.85" class="m" transform="rotate(0.03)">70</text><text x="4.7" y="44.55" font-size="3.0" text-anchor="middle" fill="#404040" fill-opacity="0.95" class="s" transform="rotate(-90 4.700000000000001 43.55)">IOs/second read (-) / write (+)</text><text x="41.3" y="80.75" font-size="2.9" text-anchor="middle" fill="#404040" fill-opacity="0.9" class="s" transform="rotate(0.03)">Tue 00:00</text><text x="84.6" y="80.75" font-size="2.9" text-anchor="middle" fill="#404040" fill-opacity="0.9" class="s" transform="rotate(0.03)">Tue 12:00</text><text x="128.4" y="80.75" font-size="2.9" text-anchor="middle" fill="#404040" fill-opacity="0.9" class="s" transform="rotate(0.03)">Wed 00:00</text><path d="M145.29999999999998 2.4v22" stroke="#c4c4c4" stroke-width="0.6" stroke-dasharray="0.8 0.7" fill="none"/><text x="50.8" y="86.55" font-size="3.25" text-anchor="end" fill="#404040" fill-opacity="0.85" class="m" transform="rotate(0.03)">Cur (-/+)</text><text x="81.4" y="86.55" font-size="3.25" text-anchor="end" fill="#404040" fill-opacity="0.85" class="m" transform="rotate(0.03)">Min (-/+)</text><text x="109.3" y="86.55" font-size="3.25" text-anchor="end" fill="#404040" fill-opacity="0.85" class="m" transform="rotate(0.03)">Avg (-/+)</text><text x="142.4" y="86.55" font-size="3.25" text-anchor="end" fill="#404040" fill-opacity="0.85" class="m" transform="rotate(0.03)">Max (-/+)</text><rect x="3.7" y="89.10" width="2.1" height="2.1" fill="#00cc00"/><text x="7.9" y="91.15" font-size="3.25" text-anchor="start" fill="#404040" fill-opacity="0.85" class="m" transform="rotate(0.03)">sda</text><text x="53.5" y="91.15" font-size="3.25" text-anchor="end" fill="#404040" fill-opacity="0.85" class="m" transform="rotate(0.03)">2.47m/  3.43</text><text x="81.4" y="91.15" font-size="3.25" text-anchor="end" fill="#404040" fill-opacity="0.85" class="m" transform="rotate(0.03)">0.00 /  3.35</text><text x="112.8" y="91.15" font-size="3.25" text-anchor="end" fill="#404040" fill-opacity="0.85" class="m" transform="rotate(0.03)">16.56m/  3.57</text><text x="143.8" y="91.15" font-size="3.25" text-anchor="end" fill="#404040" fill-opacity="0.85" class="m" transform="rotate(0.03)">1.75 /  6.03</text><text x="143.8" y="95.25" font-size="3.25" text-anchor="end" fill="#404040" fill-opacity="0.85" class="m" transform="rotate(0.03)">Last update: Wed Mar 18 03:00:09 2020</text><text x="75.6" y="95.85" font-size="1.6" text-anchor="middle" fill="#999" fill-opacity="0.8" class="s" transform="rotate(0.03)">Munin 2.0.25</text></svg></div>
<div class="g" style="left:242px;top:385px"><svg width="150" height="103" viewBox="0 0 150 103"><rect x="0.2" y="0.0" width="148.2" height="101.1" fill="#f0f0f0"/><path d="M0.7 101.1V0.5H148.39999999999998" stroke="#d6d6d6" stroke-width="1" fill="none"/><path d="M147.89999999999998 0.0V100.6H0.2" stroke="#a6a6a6" stroke-width="1.1" fill="none"/><text x="74.7" y="5.20" font-size="3.85" text-anchor="middle" fill="#333" fill-opacity="0.85" class="s" transform="rotate(0.03)">Asterisk - VoIP Peers - SIP - by day</text><rect x="14.2" y="9.4" width="124.8" height="55.4" fill="#fff"/><path d="M15.72 9.4V64.8M19.35 9.4V64.8M22.98 9.4V64.8M26.61 9.4V64.8M30.24 9.4V64.8M33.87 9.4V64.8M37.50 9.4V64.8M41.13 9.4V64.8M44.76 9.4V64.8M48.39 9.4V64.8M52.02 9.4V64.8M55.65 9.4V64.8M59.28 9.4V64.8M62.91 9.4V64.8M66.54 9.4V64.8M70.17 9.4V64.8M73.80 9.4V64.8M77.43 9.4V64.8M81.06 9.4V64.8M84.69 9.4V64.8M88.32 9.4V64.8M91.95 9.4V64.8M95.58 9.4V64.8M99.21 9.4V64.8M102.84 9.4V64.8M106.47 9.4V64.8M110.10 9.4V64.8M113.73 9.4V64.8M117.36 9.4V64.8M120.99 9.4V64.8M124.62 9.4V64.8M128.25 9.4V64.8M131.88 9.4V64.8M135.51 9.4V64.8" stroke="#f9caca" stroke-width="0.4" fill="none" opacity="0.32"/><path d="M14.2 60.18H139M14.2 50.95H139M14.2 41.72H139M14.2 32.48H139M14.2 23.25H139M14.2 14.02H139" stroke="#f9caca" stroke-width="0.4" fill="none" opacity="0.32"/><path d="M14.2 64.80H139M14.2 55.57H139M14.2 46.33H139M14.2 37.10H139M14.2 27.87H139M14.2 18.63H139M14.2 9.40H139" stroke="#f4a4a4" stroke-width="0.4" fill="none" opacity="0.45"/><path d="M37.50 9.4V64.8M82.60 9.4V64.8M127.70 9.4V64.8" stroke="#f4a4a4" stroke-width="0.4" fill="none" opacity="0.33"/><rect x="14.2" y="17.3" width="124.8" height="47.50" fill="#0866b4"/><path d="M15.20 17.3V64.8" stroke="#003a80" stroke-width="0.35" opacity="0.35"/><path d="M18.83 17.3V64.8" stroke="#003a80" stroke-width="0.35" opacity="0.35"/><path d="M22.46 17.3V64.8" stroke="#003a80" stroke-width="0.35" opacity="0.35"/><path d="M26.09 17.3V64.8" stroke="#003a80" stroke-width="0.35" opacity="0.35"/><path d="M29.72 17.3V64.8" stroke="#003a80" stroke-width="0.35" opacity="0.35"/><path d="M33.35 17.3V64.8" stroke="#003a80" stroke-width="0.35" opacity="0.35"/><path d="M36.98 17.3V64.8" stroke="#003a80" stroke-width="0.35" opacity="0.35"/><path d="M40.61 17.3V64.8" stroke="#003a80" stroke-width="0.35" opacity="0.35"/><path d="M44.24 17.3V64.8" stroke="#003a80" stroke-width="0.35" opacity="0.35"/><path d="M47.87 17.3V64.8" stroke="#003a80" stroke-width="0.35" opacity="0.35"/><path d="M51.50 17.3V64.8" stroke="#003a80" stroke-width="0.35" opacity="0.35"/><path d="M55.13 17.3V64.8" stroke="#003a80" stroke-width="0.35" opacity="0.35"/><path d="M58.76 17.3V64.8" stroke="#003a80" stroke-width="0.35" opacity="0.35"/><path d="M62.39 17.3V64.8" stroke="#003a80" stroke-width="0.35" opacity="0.35"/><path d="M66.02 17.3V64.8" stroke="#003a80" stroke-width="0.35" opacity="0.35"/><path d="M69.65 17.3V64.8" stroke="#003a80" stroke-width="0.35" opacity="0.35"/><path d="M73.28 17.3V64.8" stroke="#003a80" stroke-width="0.35" opacity="0.35"/><path d="M76.91 17.3V64.8" stroke="#003a80" stroke-width="0.35" opacity="0.35"/><path d="M80.54 17.3V64.8" stroke="#003a80" stroke-width="0.35" opacity="0.35"/><path d="M84.17 17.3V64.8" stroke="#003a80" stroke-width="0.35" opacity="0.35"/><path d="M87.80 17.3V64.8" stroke="#003a80" stroke-width="0.35" opacity="0.35"/><path d="M91.43 17.3V64.8" stroke="#003a80" stroke-width="0.35" opacity="0.35"/><path d="M95.06 17.3V64.8" stroke="#003a80" stroke-width="0.35" opacity="0.35"/><path d="M98.69 17.3V64.8" stroke="#003a80" stroke-width="0.35" opacity="0.35"/><path d="M102.32 17.3V64.8" stroke="#003a80" stroke-width="0.35" opacity="0.35"/><path d="M105.95 17.3V64.8" stroke="#003a80" stroke-width="0.35" opacity="0.35"/><path d="M109.58 17.3V64.8" stroke="#003a80" stroke-width="0.35" opacity="0.35"/><path d="M113.21 17.3V64.8" stroke="#003a80" stroke-width="0.35" opacity="0.35"/><path d="M116.84 17.3V64.8" stroke="#003a80" stroke-width="0.35" opacity="0.35"/><path d="M120.47 17.3V64.8" stroke="#003a80" stroke-width="0.35" opacity="0.35"/><path d="M124.10 17.3V64.8" stroke="#003a80" stroke-width="0.35" opacity="0.35"/><path d="M127.73 17.3V64.8" stroke="#003a80" stroke-width="0.35" opacity="0.35"/><path d="M131.36 17.3V64.8" stroke="#003a80" stroke-width="0.35" opacity="0.35"/><path d="M134.99 17.3V64.8" stroke="#003a80" stroke-width="0.35" opacity="0.35"/><path d="M138.62 17.3V64.8" stroke="#003a80" stroke-width="0.35" opacity="0.35"/><path d="M14.2 60.18H139" stroke="#003a80" stroke-width="0.35" opacity="0.28"/><path d="M14.2 55.57H139" stroke="#003a80" stroke-width="0.35" opacity="0.28"/><path d="M14.2 50.95H139" stroke="#003a80" stroke-width="0.35" opacity="0.28"/><path d="M14.2 46.33H139" stroke="#003a80" stroke-width="0.35" opacity="0.28"/><path d="M14.2 41.72H139" stroke="#003a80" stroke-width="0.35" opacity="0.28"/><path d="M14.2 37.10H139" stroke="#003a80" stroke-width="0.35" opacity="0.28"/><path d="M14.2 32.48H139" stroke="#003a80" stroke-width="0.35" opacity="0.28"/><path d="M14.2 27.87H139" stroke="#003a80" stroke-width="0.35" opacity="0.28"/><path d="M14.2 23.25H139" stroke="#003a80" stroke-width="0.35" opacity="0.28"/><path d="M14.2 18.63H139" stroke="#003a80" stroke-width="0.35" opacity="0.28"/><path d="M14.2 64.8H140.2" stroke="#9ab" stroke-width="0.4" fill="none" opacity="0.7"/><text x="12.6" y="65.85" font-size="3.0" text-anchor="end" fill="#404040" fill-opacity="0.85" class="m" transform="rotate(0.03)">0</text><text x="12.6" y="56.62" font-size="3.0" text-anchor="end" fill="#404040" fill-opacity="0.85" class="m" transform="rotate(0.03)">50</text><text x="12.6" y="47.38" font-size="3.0" text-anchor="end" fill="#404040" fill-opacity="0.85" class="m" transform="rotate(0.03)">100</text><text x="12.6" y="38.15" font-size="3.0" text-anchor="end" fill="#404040" fill-opacity="0.85" class="m" transform="rotate(0.03)">150</text><text x="12.6" y="28.92" font-size="3.0" text-anchor="end" fill="#404040" fill-opacity="0.85" class="m" transform="rotate(0.03)">200</text><text x="12.6" y="19.68" font-size="3.0" text-anchor="end" fill="#404040" fill-opacity="0.85" class="m" transform="rotate(0.03)">250</text><text x="12.6" y="10.45" font-size="3.0" text-anchor="end" fill="#404040" fill-opacity="0.85" class="m" transform="rotate(0.03)">300</text><text x="38.0" y="69.05" font-size="2.9" text-anchor="middle" fill="#404040" fill-opacity="0.9" class="s" transform="rotate(0.03)">Tue 00:00</text><text x="83.1" y="69.05" font-size="2.9" text-anchor="middle" fill="#404040" fill-opacity="0.9" class="s" transform="rotate(0.03)">Tue 12:00</text><text x="128.2" y="69.05" font-size="2.9" text-anchor="middle" fill="#404040" fill-opacity="0.9" class="s" transform="rotate(0.03)">Wed 00:00</text><path d="M144.99999999999997 2.5v22" stroke="#c4c4c4" stroke-width="0.6" stroke-dasharray="0.8 0.7" fill="none"/><text x="57.4" y="73.55" font-size="3.25" text-anchor="end" fill="#404040" fill-opacity="0.85" class="m" transform="rotate(0.03)">Cur:</text><text x="85.9" y="73.55" font-size="3.25" text-anchor="end" fill="#404040" fill-opacity="0.85" class="m" transform="rotate(0.03)">Min:</text><text x="114.2" y="73.55" font-size="3.25" text-anchor="end" fill="#404040" fill-opacity="0.85" class="m" transform="rotate(0.03)">Avg:</text><text x="142.4" y="73.55" font-size="3.25" text-anchor="end" fill="#404040" fill-opacity="0.85" class="m" transform="rotate(0.03)">Max:</text><rect x="3.7" y="75.60" width="2.1" height="2.1" fill="#00cc00"/><text x="7.9" y="77.65" font-size="3.25" text-anchor="start" fill="#404040" fill-opacity="0.85" class="m" transform="rotate(0.03)">online</text><text x="57.4" y="77.65" font-size="3.25" text-anchor="end" fill="#404040" fill-opacity="0.85" class="m" transform="rotate(0.03)">0.00</text><text x="85.9" y="77.65" font-size="3.25" text-anchor="end" fill="#404040" fill-opacity="0.85" class="m" transform="rotate(0.03)">0.00</text><text x="114.2" y="77.65" font-size="3.25" text-anchor="end" fill="#404040" fill-opacity="0.85" class="m" transform="rotate(0.03)">0.00</text><text x="142.4" y="77.65" font-size="3.25" text-anchor="end" fill="#404040" fill-opacity="0.85" class="m" transform="rotate(0.03)">0.00</text><rect x="3.7" y="79.32" width="2.1" height="2.1" fill="#0066b3"/><text x="7.9" y="81.37" font-size="3.25" text-anchor="start" fill="#404040" fill-opacity="0.85" class="m" transform="rotate(0.03)">unmonitored</text><text x="57.4" y="81.37" font-size="3.25" text-anchor="end" fill="#404040" fill-opacity="0.85" class="m" transform="rotate(0.03)">260.00</text><text x="85.9" y="81.37" font-size="3.25" text-anchor="end" fill="#404040" fill-opacity="0.85" class="m" transform="rotate(0.03)">260.00</text><text x="114.2" y="81.37" font-size="3.25" text-anchor="end" fill="#404040" fill-opacity="0.85" class="m" transform="rotate(0.03)">260.00</text><text x="142.4" y="81.37" font-size="3.25" text-anchor="end" fill="#404040" fill-opacity="0.85" class="m" transform="rotate(0.03)">260.00</text><rect x="3.7" y="83.05" width="2.1" height="2.1" fill="#ff8000"/><text x="7.9" y="85.10" font-size="3.25" text-anchor="start" fill="#404040" fill-opacity="0.85" class="m" transform="rotate(0.03)">unreachable</text><text x="57.4" y="85.10" font-size="3.25" text-anchor="end" fill="#404040" fill-opacity="0.85" class="m" transform="rotate(0.03)">0.00</text><text x="85.9" y="85.10" font-size="3.25" text-anchor="end" fill="#404040" fill-opacity="0.85" class="m" transform="rotate(0.03)">0.00</text><text x="114.2" y="85.10" font-size="3.25" text-anchor="end" fill="#404040" fill-opacity="0.85" class="m" transform="rotate(0.03)">0.00</text><text x="142.4" y="85.10" font-size="3.25" text-anchor="end" fill="#404040" fill-opacity="0.85" class="m" transform="rotate(0.03)">0.00</text><rect x="3.7" y="86.78" width="2.1" height="2.1" fill="#ffcc00"/><text x="7.9" y="88.83" font-size="3.25" text-anchor="start" fill="#404040" fill-opacity="0.85" class="m" transform="rotate(0.03)">lagged</text><text x="57.4" y="88.83" font-size="3.25" text-anchor="end" fill="#404040" fill-opacity="0.85" class="m" transform="rotate(0.03)">0.00</text><text x="85.9" y="88.83" font-size="3.25" text-anchor="end" fill="#404040" fill-opacity="0.85" class="m" transform="rotate(0.03)">0.00</text><text x="114.2" y="88.83" font-size="3.25" text-anchor="end" fill="#404040" fill-opacity="0.85" class="m" transform="rotate(0.03)">0.00</text><text x="142.4" y="88.83" font-size="3.25" text-anchor="end" fill="#404040" fill-opacity="0.85" class="m" transform="rotate(0.03)">0.00</text><rect x="3.7" y="90.50" width="2.1" height="2.1" fill="#330099"/><text x="7.9" y="92.55" font-size="3.25" text-anchor="start" fill="#404040" fill-opacity="0.85" class="m" transform="rotate(0.03)">unknown</text><text x="57.4" y="92.55" font-size="3.25" text-anchor="end" fill="#404040" fill-opacity="0.85" class="m" transform="rotate(0.03)">0.00</text><text x="85.9" y="92.55" font-size="3.25" text-anchor="end" fill="#404040" fill-opacity="0.85" class="m" transform="rotate(0.03)">0.00</text><text x="114.2" y="92.55" font-size="3.25" text-anchor="end" fill="#404040" fill-opacity="0.85" class="m" transform="rotate(0.03)">0.00</text><text x="142.4" y="92.55" font-size="3.25" text-anchor="end" fill="#404040" fill-opacity="0.85" class="m" transform="rotate(0.03)">0.00</text><text x="142.4" y="96.35" font-size="3.25" text-anchor="end" fill="#404040" fill-opacity="0.85" class="m" transform="rotate(0.03)">Last update: Wed Mar 18 03:00:08 2020</text><text x="75.3" y="96.95" font-size="1.6" text-anchor="middle" fill="#999" fill-opacity="0.8" class="s" transform="rotate(0.03)">Munin 2.0.25</text></svg></div>
<div class="g" style="left:408.8px;top:385px"><svg width="150" height="103" viewBox="0 0 150 103"><rect x="0.45" y="0.0" width="148.2" height="101.1" fill="#f0f0f0"/><path d="M0.95 101.1V0.5H148.64999999999998" stroke="#d6d6d6" stroke-width="1" fill="none"/><path d="M148.14999999999998 0.0V100.6H0.45" stroke="#a6a6a6" stroke-width="1.1" fill="none"/><text x="75.0" y="5.20" font-size="3.85" text-anchor="middle" fill="#333" fill-opacity="0.85" class="s" transform="rotate(0.03)">Asterisk - Active Channels - by day</text><rect x="14.2" y="9.4" width="124.8" height="55.4" fill="#fff"/><path d="M15.72 9.4V64.8M19.35 9.4V64.8M22.98 9.4V64.8M26.61 9.4V64.8M30.24 9.4V64.8M33.87 9.4V64.8M37.50 9.4V64.8M41.13 9.4V64.8M44.76 9.4V64.8M48.39 9.4V64.8M52.02 9.4V64.8M55.65 9.4V64.8M59.28 9.4V64.8M62.91 9.4V64.8M66.54 9.4V64.8M70.17 9.4V64.8M73.80 9.4V64.8M77.43 9.4V64.8M81.06 9.4V64.8M84.69 9.4V64.8M88.32 9.4V64.8M91.95 9.4V64.8M95.58 9.4V64.8M99.21 9.4V64.8M102.84 9.4V64.8M106.47 9.4V64.8M110.10 9.4V64.8M113.73 9.4V64.8M117.36 9.4V64.8M120.99 9.4V64.8M124.62 9.4V64.8M128.25 9.4V64.8M131.88 9.4V64.8M135.51 9.4V64.8" stroke="#f9caca" stroke-width="0.4" fill="none" opacity="0.32"/><path d="M14.2 62.03H139M14.2 56.49H139M14.2 50.95H139M14.2 45.41H139M14.2 39.87H139M14.2 34.33H139M14.2 28.79H139M14.2 23.25H139M14.2 17.71H139M14.2 12.17H139" stroke="#f9caca" stroke-width="0.4" fill="none" opacity="0.32"/><path d="M14.2 64.80H139M14.2 59.26H139M14.2 53.72H139M14.2 48.18H139M14.2 42.64H139M14.2 37.10H139M14.2 31.56H139M14.2 26.02H139M14.2 20.48H139M14.2 14.94H139M14.2 9.40H139" stroke="#f4a4a4" stroke-width="0.4" fill="none" opacity="0.45"/><path d="M37.50 9.4V64.8M82.60 9.4V64.8M127.70 9.4V64.8" stroke="#f4a4a4" stroke-width="0.4" fill="none" opacity="0.33"/><path d="M14.2 64.8H140.2" stroke="#9ab" stroke-width="0.4" fill="none" opacity="0.7"/><path d="M14.2 64.6H139" stroke="#8e80d0" stroke-width="1.4"/><text x="12.6" y="65.85" font-size="3.0" text-anchor="end" fill="#404040" fill-opacity="0.85" class="m" transform="rotate(0.03)">0.0</text><text x="12.6" y="60.31" font-size="3.0" text-anchor="end" fill="#404040" fill-opacity="0.85" class="m" transform="rotate(0.03)">0.1</text><text x="12.6" y="54.77" font-size="3.0" text-anchor="end" fill="#404040" fill-opacity="0.85" class="m" transform="rotate(0.03)">0.2</text><text x="12.6" y="49.23" font-size="3.0" text-anchor="end" fill="#404040" fill-opacity="0.85" class="m" transform="rotate(0.03)">0.3</text><text x="12.6" y="43.69" font-size="3.0" text-anchor="end" fill="#404040" fill-opacity="0.85" class="m" transform="rotate(0.03)">0.4</text><text x="12.6" y="38.15" font-size="3.0" text-anchor="end" fill="#404040" fill-opacity="0.85" class="m" transform="rotate(0.03)">0.5</text><text x="12.6" y="32.61" font-size="3.0" text-anchor="end" fill="#404040" fill-opacity="0.85" class="m" transform="rotate(0.03)">0.6</text><text x="12.6" y="27.07" font-size="3.0" text-anchor="end" fill="#404040" fill-opacity="0.85" class="m" transform="rotate(0.03)">0.7</text><text x="12.6" y="21.53" font-size="3.0" text-anchor="end" fill="#404040" fill-opacity="0.85" class="m" transform="rotate(0.03)">0.8</text><text x="12.6" y="15.99" font-size="3.0" text-anchor="end" fill="#404040" fill-opacity="0.85" class="m" transform="rotate(0.03)">0.9</text><text x="12.6" y="10.45" font-size="3.0" text-anchor="end" fill="#404040" fill-opacity="0.85" class="m" transform="rotate(0.03)">1.0</text><text x="38.0" y="69.05" font-size="2.9" text-anchor="middle" fill="#404040" fill-opacity="0.9" class="s" transform="rotate(0.03)">Tue 00:00</text><text x="83.1" y="69.05" font-size="2.9" text-anchor="middle" fill="#404040" fill-opacity="0.9" class="s" transform="rotate(0.03)">Tue 12:00</text><text x="128.2" y="69.05" font-size="2.9" text-anchor="middle" fill="#404040" fill-opacity="0.9" class="s" transform="rotate(0.03)">Wed 00:00</text><path d="M145.24999999999997 2.5v22" stroke="#c4c4c4" stroke-width="0.6" stroke-dasharray="0.8 0.7" fill="none"/><text x="48.9" y="73.55" font-size="3.25" text-anchor="end" fill="#404040" fill-opacity="0.85" class="m" transform="rotate(0.03)">Cur:</text><text x="79.9" y="73.55" font-size="3.25" text-anchor="end" fill="#404040" fill-opacity="0.85" class="m" transform="rotate(0.03)">Min:</text><text x="110.9" y="73.55" font-size="3.25" text-anchor="end" fill="#404040" fill-opacity="0.85" class="m" transform="rotate(0.03)">Avg:</text><text x="142.6" y="73.55" font-size="3.25" text-anchor="end" fill="#404040" fill-opacity="0.85" class="m" transform="rotate(0.03)">Max:</text><rect x="3.7" y="75.60" width="2.1" height="2.1" fill="#00cc00"/><text x="7.9" y="77.65" font-size="3.25" text-anchor="start" fill="#404040" fill-opacity="0.85" class="m" transform="rotate(0.03)">dahdi</text><text x="48.9" y="77.65" font-size="3.25" text-anchor="end" fill="#404040" fill-opacity="0.85" class="m" transform="rotate(0.03)">0.00</text><text x="79.9" y="77.65" font-size="3.25" text-anchor="end" fill="#404040" fill-opacity="0.85" class="m" transform="rotate(0.03)">0.00</text><text x="110.9" y="77.65" font-size="3.25" text-anchor="end" fill="#404040" fill-opacity="0.85" class="m" transform="rotate(0.03)">0.00</text><text x="142.6" y="77.65" font-size="3.25" text-anchor="end" fill="#404040" fill-opacity="0.85" class="m" transform="rotate(0.03)">0.00</text><rect x="3.7" y="79.32" width="2.1" height="2.1" fill="#0066b3"/><text x="7.9" y="81.37" font-size="3.25" text-anchor="start" fill="#404040" fill-opacity="0.85" class="m" transform="rotate(0.03)">sip</text><text x="48.9" y="81.37" font-size="3.25" text-anchor="end" fill="#404040" fill-opacity="0.85" class="m" transform="rotate(0.03)">0.00</text><text x="79.9" y="81.37" font-size="3.25" text-anchor="end" fill="#404040" fill-opacity="0.85" class="m" transform="rotate(0.03)">0.00</text><text x="110.9" y="81.37" font-size="3.25" text-anchor="end" fill="#404040" fill-opacity="0.85" class="m" transform="rotate(0.03)">0.00</text><text x="142.6" y="81.37" font-size="3.25" text-anchor="end" fill="#404040" fill-opacity="0.85" class="m" transform="rotate(0.03)">0.00</text><rect x="3.7" y="83.05" width="2.1" height="2.1" fill="#ff8000"/><text x="7.9" y="85.10" font-size="3.25" text-anchor="start" fill="#404040" fill-opacity="0.85" class="m" transform="rotate(0.03)">iax2</text><text x="48.9" y="85.10" font-size="3.25" text-anchor="end" fill="#404040" fill-opacity="0.85" class="m" transform="rotate(0.03)">0.00</text><text x="79.9" y="85.10" font-size="3.25" text-anchor="end" fill="#404040" fill-opacity="0.85" class="m" transform="rotate(0.03)">0.00</text><text x="110.9" y="85.10" font-size="3.25" text-anchor="end" fill="#404040" fill-opacity="0.85" class="m" transform="rotate(0.03)">0.00</text><text x="142.6" y="85.10" font-size="3.25" text-anchor="end" fill="#404040" fill-opacity="0.85" class="m" transform="rotate(0.03)">0.00</text><rect x="3.7" y="86.78" width="2.1" height="2.1" fill="#ffcc00"/><text x="7.9" y="88.83" font-size="3.25" text-anchor="start" fill="#404040" fill-opacity="0.85" class="m" transform="rotate(0.03)">local</text><text x="48.9" y="88.83" font-size="3.25" text-anchor="end" fill="#404040" fill-opacity="0.85" class="m" transform="rotate(0.03)">0.00</text><text x="79.9" y="88.83" font-size="3.25" text-anchor="end" fill="#404040" fill-opacity="0.85" class="m" transform="rotate(0.03)">0.00</text><text x="110.9" y="88.83" font-size="3.25" text-anchor="end" fill="#404040" fill-opacity="0.85" class="m" transform="rotate(0.03)">0.00</text><text x="142.6" y="88.83" font-size="3.25" text-anchor="end" fill="#404040" fill-opacity="0.85" class="m" transform="rotate(0.03)">0.00</text><rect x="3.7" y="90.50" width="2.1" height="2.1" fill="#330099"/><text x="7.9" y="92.55" font-size="3.25" text-anchor="start" fill="#404040" fill-opacity="0.85" class="m" transform="rotate(0.03)">mix</text><text x="48.9" y="92.55" font-size="3.25" text-anchor="end" fill="#404040" fill-opacity="0.85" class="m" transform="rotate(0.03)">0.00</text><text x="79.9" y="92.55" font-size="3.25" text-anchor="end" fill="#404040" fill-opacity="0.85" class="m" transform="rotate(0.03)">0.00</text><text x="110.9" y="92.55" font-size="3.25" text-anchor="end" fill="#404040" fill-opacity="0.85" class="m" transform="rotate(0.03)">0.00</text><text x="142.6" y="92.55" font-size="3.25" text-anchor="end" fill="#404040" fill-opacity="0.85" class="m" transform="rotate(0.03)">0.00</text><text x="142.6" y="96.35" font-size="3.25" text-anchor="end" fill="#404040" fill-opacity="0.85" class="m" transform="rotate(0.03)">Last update: Wed Mar 18 03:00:04 2020</text><text x="75.5" y="96.95" font-size="1.6" text-anchor="middle" fill="#999" fill-opacity="0.8" class="s" transform="rotate(0.03)">Munin 2.0.25</text></svg></div>
<div class="g" style="left:575px;top:385px"><svg width="150" height="103" viewBox="0 0 150 103"><rect x="0.75" y="0.0" width="148.2" height="101.1" fill="#f0f0f0"/><path d="M1.25 101.1V0.5H148.95" stroke="#d6d6d6" stroke-width="1" fill="none"/><path d="M148.45 0.0V100.6H0.75" stroke="#a6a6a6" stroke-width="1.1" fill="none"/><text x="75.2" y="5.20" font-size="3.85" text-anchor="middle" fill="#333" fill-opacity="0.85" class="s" transform="rotate(0.03)">Asterisk - VoIP Codecs for Active Channels - by day</text><rect x="14.2" y="9.0" width="125.4" height="53.7" fill="#fff"/><path d="M15.72 9.0V62.7M19.35 9.0V62.7M22.98 9.0V62.7M26.61 9.0V62.7M30.24 9.0V62.7M33.87 9.0V62.7M37.50 9.0V62.7M41.13 9.0V62.7M44.76 9.0V62.7M48.39 9.0V62.7M52.02 9.0V62.7M55.65 9.0V62.7M59.28 9.0V62.7M62.91 9.0V62.7M66.54 9.0V62.7M70.17 9.0V62.7M73.80 9.0V62.7M77.43 9.0V62.7M81.06 9.0V62.7M84.69 9.0V62.7M88.32 9.0V62.7M91.95 9.0V62.7M95.58 9.0V62.7M99.21 9.0V62.7M102.84 9.0V62.7M106.47 9.0V62.7M110.10 9.0V62.7M113.73 9.0V62.7M117.36 9.0V62.7M120.99 9.0V62.7M124.62 9.0V62.7M128.25 9.0V62.7M131.88 9.0V62.7M135.51 9.0V62.7M139.14 9.0V62.7" stroke="#f9caca" stroke-width="0.4" fill="none" opacity="0.32"/><path d="M14.2 60.02H139.6M14.2 54.65H139.6M14.2 49.28H139.6M14.2 43.91H139.6M14.2 38.54H139.6M14.2 33.16H139.6M14.2 27.80H139.6M14.2 22.43H139.6M14.2 17.05H139.6M14.2 11.69H139.6" stroke="#f9caca" stroke-width="0.4" fill="none" opacity="0.32"/><path d="M14.2 62.70H139.6M14.2 57.33H139.6M14.2 51.96H139.6M14.2 46.59H139.6M14.2 41.22H139.6M14.2 35.85H139.6M14.2 30.48H139.6M14.2 25.11H139.6M14.2 19.74H139.6M14.2 14.37H139.6M14.2 9.00H139.6" stroke="#f4a4a4" stroke-width="0.4" fill="none" opacity="0.45"/><path d="M37.50 9.0V62.7M82.60 9.0V62.7M127.70 9.0V62.7" stroke="#f4a4a4" stroke-width="0.4" fill="none" opacity="0.33"/><path d="M14.2 62.7H140.79999999999998" stroke="#9ab" stroke-width="0.4" fill="none" opacity="0.7"/><text x="12.6" y="63.75" font-size="3.0" text-anchor="end" fill="#404040" fill-opacity="0.85" class="m" transform="rotate(0.03)">0.0</text><text x="12.6" y="58.38" font-size="3.0" text-anchor="end" fill="#404040" fill-opacity="0.85" class="m" transform="rotate(0.03)">0.1</text><text x="12.6" y="53.01" font-size="3.0" text-anchor="end" fill="#404040" fill-opacity="0.85" class="m" transform="rotate(0.03)">0.2</text><text x="12.6" y="47.64" font-size="3.0" text-anchor="end" fill="#404040" fill-opacity="0.85" class="m" transform="rotate(0.03)">0.3</text><text x="12.6" y="42.27" font-size="3.0" text-anchor="end" fill="#404040" fill-opacity="0.85" class="m" transform="rotate(0.03)">0.4</text><text x="12.6" y="36.90" font-size="3.0" text-anchor="end" fill="#404040" fill-opacity="0.85" class="m" transform="rotate(0.03)">0.5</text><text x="12.6" y="31.53" font-size="3.0" text-anchor="end" fill="#404040" fill-opacity="0.85" class="m" transform="rotate(0.03)">0.6</text><text x="12.6" y="26.16" font-size="3.0" text-anchor="end" fill="#404040" fill-opacity="0.85" class="m" transform="rotate(0.03)">0.7</text><text x="12.6" y="20.79" font-size="3.0" text-anchor="end" fill="#404040" fill-opacity="0.85" class="m" transform="rotate(0.03)">0.8</text><text x="12.6" y="15.42" font-size="3.0" text-anchor="end" fill="#404040" fill-opacity="0.85" class="m" transform="rotate(0.03)">0.9</text><text x="12.6" y="10.05" font-size="3.0" text-anchor="end" fill="#404040" fill-opacity="0.85" class="m" transform="rotate(0.03)">1.0</text><text x="38.0" y="66.35" font-size="2.9" text-anchor="middle" fill="#404040" fill-opacity="0.9" class="s" transform="rotate(0.03)">Tue 00:00</text><text x="83.1" y="66.35" font-size="2.9" text-anchor="middle" fill="#404040" fill-opacity="0.9" class="s" transform="rotate(0.03)">Tue 12:00</text><text x="128.2" y="66.35" font-size="2.9" text-anchor="middle" fill="#404040" fill-opacity="0.9" class="s" transform="rotate(0.03)">Wed 00:00</text><path d="M145.54999999999998 2.5v22" stroke="#c4c4c4" stroke-width="0.6" stroke-dasharray="0.8 0.7" fill="none"/><text x="49.3" y="71.05" font-size="3.25" text-anchor="end" fill="#404040" fill-opacity="0.85" class="m" transform="rotate(0.03)">Cur:</text><text x="80.3" y="71.05" font-size="3.25" text-anchor="end" fill="#404040" fill-opacity="0.85" class="m" transform="rotate(0.03)">Min:</text><text x="111.3" y="71.05" font-size="3.25" text-anchor="end" fill="#404040" fill-opacity="0.85" class="m" transform="rotate(0.03)">Avg:</text><text x="142.8" y="71.05" font-size="3.25" text-anchor="end" fill="#404040" fill-opacity="0.85" class="m" transform="rotate(0.03)">Max:</text><rect x="3.7" y="73.20" width="2.1" height="2.1" fill="#00cc00"/><text x="7.9" y="75.25" font-size="3.25" text-anchor="start" fill="#404040" fill-opacity="0.85" class="m" transform="rotate(0.03)">ulaw</text><text x="49.3" y="75.25" font-size="3.25" text-anchor="end" fill="#404040" fill-opacity="0.85" class="m" transform="rotate(0.03)">0.00</text><text x="80.3" y="75.25" font-size="3.25" text-anchor="end" fill="#404040" fill-opacity="0.85" class="m" transform="rotate(0.03)">0.00</text><text x="111.3" y="75.25" font-size="3.25" text-anchor="end" fill="#404040" fill-opacity="0.85" class="m" transform="rotate(0.03)">0.00</text><text x="142.8" y="75.25" font-size="3.25" text-anchor="end" fill="#404040" fill-opacity="0.85" class="m" transform="rotate(0.03)">0.00</text><rect x="3.7" y="76.80" width="2.1" height="2.1" fill="#0066b3"/><text x="7.9" y="78.85" font-size="3.25" text-anchor="start" fill="#404040" fill-opacity="0.85" class="m" transform="rotate(0.03)">alaw</text><text x="49.3" y="78.85" font-size="3.25" text-anchor="end" fill="#404040" fill-opacity="0.85" class="m" transform="rotate(0.03)">0.00</text><text x="80.3" y="78.85" font-size="3.25" text-anchor="end" fill="#404040" fill-opacity="0.85" class="m" transform="rotate(0.03)">0.00</text><text x="111.3" y="78.85" font-size="3.25" text-anchor="end" fill="#404040" fill-opacity="0.85" class="m" transform="rotate(0.03)">0.00</text><text x="142.8" y="78.85" font-size="3.25" text-anchor="end" fill="#404040" fill-opacity="0.85" class="m" transform="rotate(0.03)">0.00</text><rect x="3.7" y="80.40" width="2.1" height="2.1" fill="#ff8000"/><text x="7.9" y="82.45" font-size="3.25" text-anchor="start" fill="#404040" fill-opacity="0.85" class="m" transform="rotate(0.03)">gsm</text><text x="49.3" y="82.45" font-size="3.25" text-anchor="end" fill="#404040" fill-opacity="0.85" class="m" transform="rotate(0.03)">0.00</text><text x="80.3" y="82.45" font-size="3.25" text-anchor="end" fill="#404040" fill-opacity="0.85" class="m" transform="rotate(0.03)">0.00</text><text x="111.3" y="82.45" font-size="3.25" text-anchor="end" fill="#404040" fill-opacity="0.85" class="m" transform="rotate(0.03)">0.00</text><text x="142.8" y="82.45" font-size="3.25" text-anchor="end" fill="#404040" fill-opacity="0.85" class="m" transform="rotate(0.03)">0.00</text><rect x="3.7" y="84.00" width="2.1" height="2.1" fill="#ffcc00"/><text x="7.9" y="86.05" font-size="3.25" text-anchor="start" fill="#404040" fill-opacity="0.85" class="m" transform="rotate(0.03)">ilbc</text><text x="49.3" y="86.05" font-size="3.25" text-anchor="end" fill="#404040" fill-opacity="0.85" class="m" transform="rotate(0.03)">0.00</text><text x="80.3" y="86.05" font-size="3.25" text-anchor="end" fill="#404040" fill-opacity="0.85" class="m" transform="rotate(0.03)">0.00</text><text x="111.3" y="86.05" font-size="3.25" text-anchor="end" fill="#404040" fill-opacity="0.85" class="m" transform="rotate(0.03)">0.00</text><text x="142.8" y="86.05" font-size="3.25" text-anchor="end" fill="#404040" fill-opacity="0.85" class="m" transform="rotate(0.03)">0.00</text><rect x="3.7" y="87.60" width="2.1" height="2.1" fill="#330099"/><text x="7.9" y="89.65" font-size="3.25" text-anchor="start" fill="#404040" fill-opacity="0.85" class="m" transform="rotate(0.03)">g729</text><text x="49.3" y="89.65" font-size="3.25" text-anchor="end" fill="#404040" fill-opacity="0.85" class="m" transform="rotate(0.03)">0.00</text><text x="80.3" y="89.65" font-size="3.25" text-anchor="end" fill="#404040" fill-opacity="0.85" class="m" transform="rotate(0.03)">0.00</text><text x="111.3" y="89.65" font-size="3.25" text-anchor="end" fill="#404040" fill-opacity="0.85" class="m" transform="rotate(0.03)">0.00</text><text x="142.8" y="89.65" font-size="3.25" text-anchor="end" fill="#404040" fill-opacity="0.85" class="m" transform="rotate(0.03)">0.00</text><rect x="3.7" y="91.20" width="2.1" height="2.1" fill="#990099"/><text x="7.9" y="93.25" font-size="3.25" text-anchor="start" fill="#404040" fill-opacity="0.85" class="m" transform="rotate(0.03)">other</text><text x="49.3" y="93.25" font-size="3.25" text-anchor="end" fill="#404040" fill-opacity="0.85" class="m" transform="rotate(0.03)">0.00</text><text x="80.3" y="93.25" font-size="3.25" text-anchor="end" fill="#404040" fill-opacity="0.85" class="m" transform="rotate(0.03)">0.00</text><text x="111.3" y="93.25" font-size="3.25" text-anchor="end" fill="#404040" fill-opacity="0.85" class="m" transform="rotate(0.03)">0.00</text><text x="142.8" y="93.25" font-size="3.25" text-anchor="end" fill="#404040" fill-opacity="0.85" class="m" transform="rotate(0.03)">0.00</text><text x="142.8" y="96.75" font-size="3.25" text-anchor="end" fill="#404040" fill-opacity="0.85" class="m" transform="rotate(0.03)">Last update: Wed Mar 18 03:00:03 2020</text><text x="75.8" y="97.35" font-size="1.6" text-anchor="middle" fill="#999" fill-opacity="0.8" class="s" transform="rotate(0.03)">Munin 2.0.25</text></svg></div>
<div class="g" style="left:742px;top:385px"><svg width="150" height="103" viewBox="0 0 150 103"><rect x="0.5" y="0.0" width="148.2" height="101.1" fill="#f0f0f0"/><path d="M1.0 101.1V0.5H148.7" stroke="#d6d6d6" stroke-width="1" fill="none"/><path d="M148.2 0.0V100.6H0.5" stroke="#a6a6a6" stroke-width="1.1" fill="none"/><text x="75.0" y="6.00" font-size="3.85" text-anchor="middle" fill="#333" fill-opacity="0.85" class="s" transform="rotate(0.03)">Asterisk - Call Stats - by day</text><rect x="14.2" y="10.5" width="125.0" height="62.6" fill="#fff"/><path d="M15.72 10.5V73.1M19.35 10.5V73.1M22.98 10.5V73.1M26.61 10.5V73.1M30.24 10.5V73.1M33.87 10.5V73.1M37.50 10.5V73.1M41.13 10.5V73.1M44.76 10.5V73.1M48.39 10.5V73.1M52.02 10.5V73.1M55.65 10.5V73.1M59.28 10.5V73.1M62.91 10.5V73.1M66.54 10.5V73.1M70.17 10.5V73.1M73.80 10.5V73.1M77.43 10.5V73.1M81.06 10.5V73.1M84.69 10.5V73.1M88.32 10.5V73.1M91.95 10.5V73.1M95.58 10.5V73.1M99.21 10.5V73.1M102.84 10.5V73.1M106.47 10.5V73.1M110.10 10.5V73.1M113.73 10.5V73.1M117.36 10.5V73.1M120.99 10.5V73.1M124.62 10.5V73.1M128.25 10.5V73.1M131.88 10.5V73.1M135.51 10.5V73.1M139.14 10.5V73.1" stroke="#f9caca" stroke-width="0.4" fill="none" opacity="0.32"/><path d="M14.2 69.97H139.2M14.2 63.71H139.2M14.2 57.45H139.2M14.2 51.19H139.2M14.2 44.93H139.2M14.2 38.67H139.2M14.2 32.41H139.2M14.2 26.15H139.2M14.2 19.89H139.2M14.2 13.63H139.2" stroke="#f9caca" stroke-width="0.4" fill="none" opacity="0.32"/><path d="M14.2 73.10H139.2M14.2 66.84H139.2M14.2 60.58H139.2M14.2 54.32H139.2M14.2 48.06H139.2M14.2 41.80H139.2M14.2 35.54H139.2M14.2 29.28H139.2M14.2 23.02H139.2M14.2 16.76H139.2M14.2 10.50H139.2" stroke="#f4a4a4" stroke-width="0.4" fill="none" opacity="0.45"/><path d="M37.50 10.5V73.1M82.60 10.5V73.1M127.70 10.5V73.1" stroke="#f4a4a4" stroke-width="0.4" fill="none" opacity="0.33"/><path d="M14.2 73.1H140.39999999999998" stroke="#9ab" stroke-width="0.4" fill="none" opacity="0.7"/><path d="M14.2 72.9H139.2" stroke="#78a8dc" stroke-width="1.2"/><text x="12.6" y="74.15" font-size="3.0" text-anchor="end" fill="#404040" fill-opacity="0.85" class="m" transform="rotate(0.03)">0.0</text><text x="12.6" y="67.89" font-size="3.0" text-anchor="end" fill="#404040" fill-opacity="0.85" class="m" transform="rotate(0.03)">0.1</text><text x="12.6" y="61.63" font-size="3.0" text-anchor="end" fill="#404040" fill-opacity="0.85" class="m" transform="rotate(0.03)">0.2</text><text x="12.6" y="55.37" font-size="3.0" text-anchor="end" fill="#404040" fill-opacity="0.85" class="m" transform="rotate(0.03)">0.3</text><text x="12.6" y="49.11" font-size="3.0" text-anchor="end" fill="#404040" fill-opacity="0.85" class="m" transform="rotate(0.03)">0.4</text><text x="12.6" y="42.85" font-size="3.0" text-anchor="end" fill="#404040" fill-opacity="0.85" class="m" transform="rotate(0.03)">0.5</text><text x="12.6" y="36.59" font-size="3.0" text-anchor="end" fill="#404040" fill-opacity="0.85" class="m" transform="rotate(0.03)">0.6</text><text x="12.6" y="30.33" font-size="3.0" text-anchor="end" fill="#404040" fill-opacity="0.85" class="m" transform="rotate(0.03)">0.7</text><text x="12.6" y="24.07" font-size="3.0" text-anchor="end" fill="#404040" fill-opacity="0.85" class="m" transform="rotate(0.03)">0.8</text><text x="12.6" y="17.81" font-size="3.0" text-anchor="end" fill="#404040" fill-opacity="0.85" class="m" transform="rotate(0.03)">0.9</text><text x="12.6" y="11.55" font-size="3.0" text-anchor="end" fill="#404040" fill-opacity="0.85" class="m" transform="rotate(0.03)">1.0</text><text x="38.0" y="77.25" font-size="2.9" text-anchor="middle" fill="#404040" fill-opacity="0.9" class="s" transform="rotate(0.03)">Tue 00:00</text><text x="83.1" y="77.25" font-size="2.9" text-anchor="middle" fill="#404040" fill-opacity="0.9" class="s" transform="rotate(0.03)">Tue 12:00</text><text x="128.2" y="77.25" font-size="2.9" text-anchor="middle" fill="#404040" fill-opacity="0.9" class="s" transform="rotate(0.03)">Wed 00:00</text><path d="M145.29999999999998 2.5v22" stroke="#c4c4c4" stroke-width="0.6" stroke-dasharray="0.8 0.7" fill="none"/><text x="60.1" y="82.45" font-size="3.25" text-anchor="end" fill="#404040" fill-opacity="0.85" class="m" transform="rotate(0.03)">Cur:</text><text x="87.6" y="82.45" font-size="3.25" text-anchor="end" fill="#404040" fill-opacity="0.85" class="m" transform="rotate(0.03)">Min:</text><text x="114.9" y="82.45" font-size="3.25" text-anchor="end" fill="#404040" fill-opacity="0.85" class="m" transform="rotate(0.03)">Avg:</text><text x="142.4" y="82.45" font-size="3.25" text-anchor="end" fill="#404040" fill-opacity="0.85" class="m" transform="rotate(0.03)">Max:</text><rect x="3.7" y="85.40" width="2.1" height="2.1" fill="#00cc00"/><text x="7.9" y="87.45" font-size="3.25" text-anchor="start" fill="#404040" fill-opacity="0.85" class="m" transform="rotate(0.03)">active_calls</text><text x="60.1" y="87.45" font-size="3.25" text-anchor="end" fill="#404040" fill-opacity="0.85" class="m" transform="rotate(0.03)">0.00</text><text x="87.6" y="87.45" font-size="3.25" text-anchor="end" fill="#404040" fill-opacity="0.85" class="m" transform="rotate(0.03)">0.00</text><text x="114.9" y="87.45" font-size="3.25" text-anchor="end" fill="#404040" fill-opacity="0.85" class="m" transform="rotate(0.03)">0.00</text><text x="142.4" y="87.45" font-size="3.25" text-anchor="end" fill="#404040" fill-opacity="0.85" class="m" transform="rotate(0.03)">0.00</text><rect x="3.7" y="89.50" width="2.1" height="2.1" fill="#0066b3"/><text x="7.9" y="91.55" font-size="3.25" text-anchor="start" fill="#404040" fill-opacity="0.85" class="m" transform="rotate(0.03)">calls_per_min</text><text x="60.1" y="91.55" font-size="3.25" text-anchor="end" fill="#404040" fill-opacity="0.85" class="m" transform="rotate(0.03)">0.00</text><text x="87.6" y="91.55" font-size="3.25" text-anchor="end" fill="#404040" fill-opacity="0.85" class="m" transform="rotate(0.03)">0.00</text><text x="114.9" y="91.55" font-size="3.25" text-anchor="end" fill="#404040" fill-opacity="0.85" class="m" transform="rotate(0.03)">0.00</text><text x="142.4" y="91.55" font-size="3.25" text-anchor="end" fill="#404040" fill-opacity="0.85" class="m" transform="rotate(0.03)">0.00</text><text x="142.4" y="95.65" font-size="3.25" text-anchor="end" fill="#404040" fill-opacity="0.85" class="m" transform="rotate(0.03)">Last update: Wed Mar 18 03:00:01 2020</text><text x="75.6" y="96.25" font-size="1.6" text-anchor="middle" fill="#999" fill-opacity="0.8" class="s" transform="rotate(0.03)">Munin 2.0.25</text></svg></div>


<span class="sx" id="lic">License Terms</span>
<span class="sx" id="copy">© 2020 Third Lane Technologies. All rights reserved.</span>
</body>
</html>
